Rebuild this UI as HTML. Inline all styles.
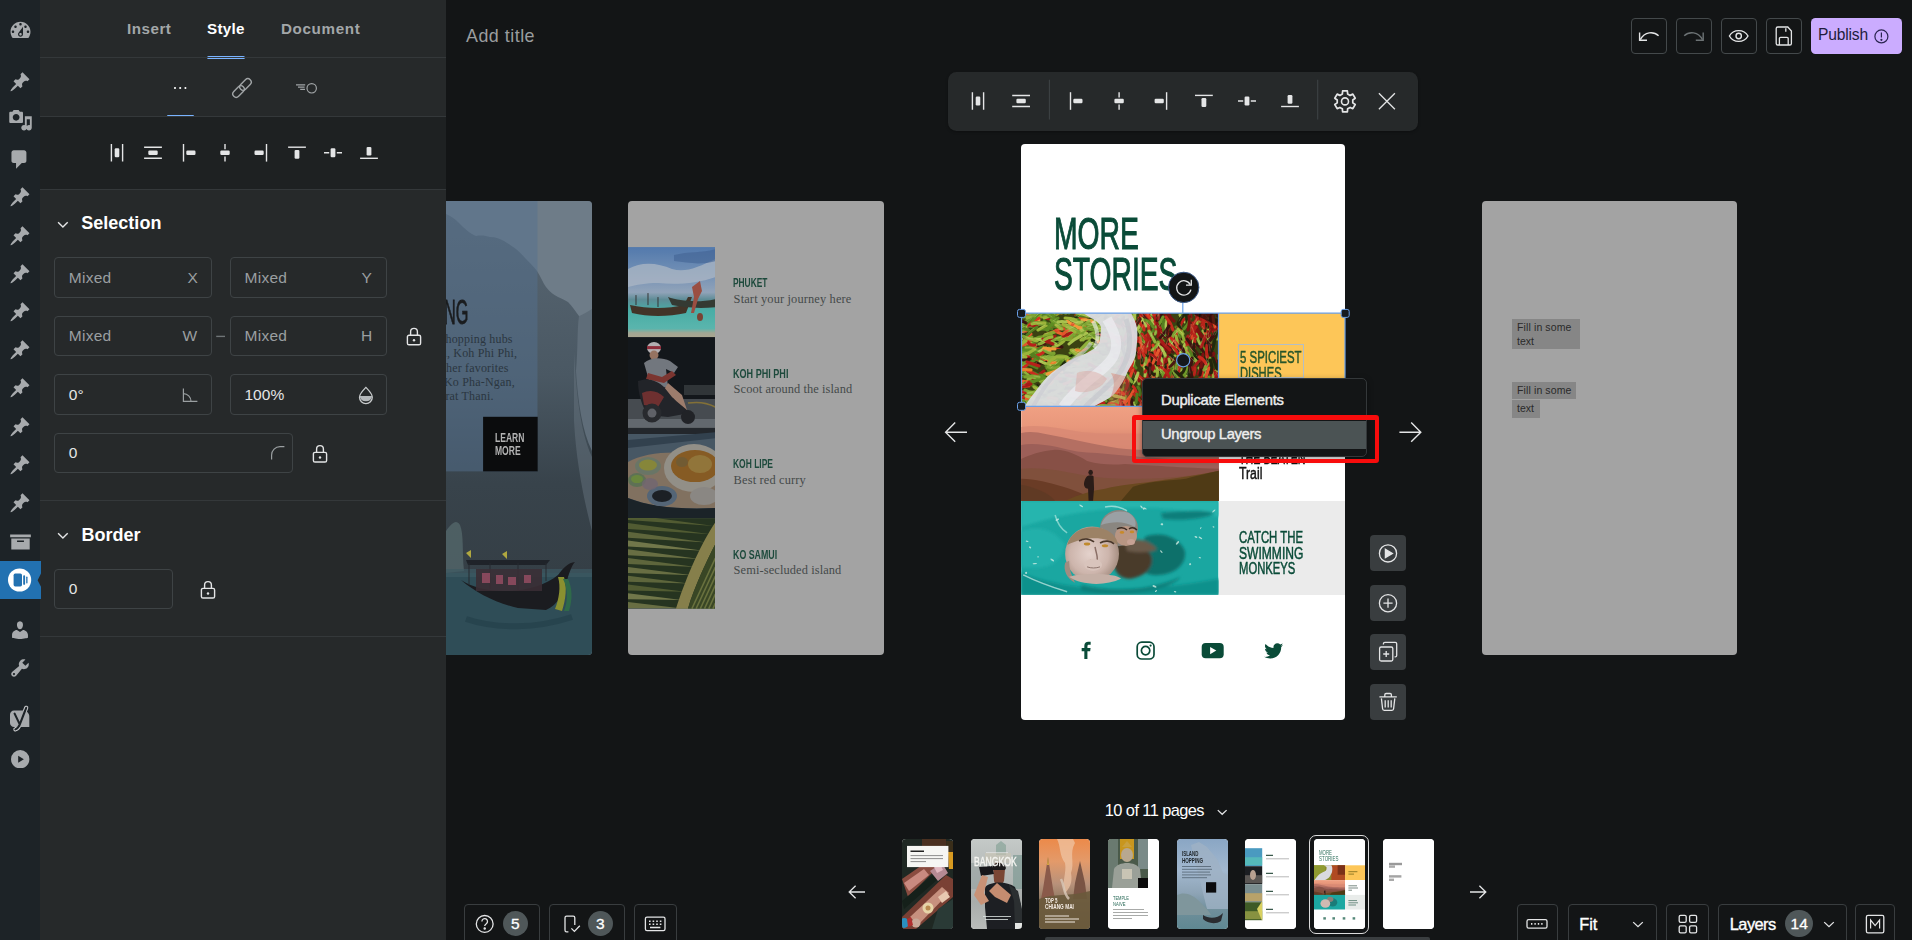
<!DOCTYPE html>
<html>
<head>
<meta charset="utf-8">
<title>Web Stories Editor</title>
<style>
*{box-sizing:border-box;margin:0;padding:0}
html,body{width:1912px;height:940px;overflow:hidden;background:#131516}
body{position:relative;font-family:"Liberation Sans",sans-serif;color:#e4e5e6}
.abs{position:absolute}
svg{position:absolute;overflow:hidden}
.t{position:absolute;white-space:nowrap;line-height:1}
/* WP sidebar */
#wp{position:absolute;left:0;top:0;width:40px;height:940px;background:#1d2327}
#wp svg{fill:#a7aaad}
#wpa{position:absolute;left:0;top:561px;width:41px;height:38.4px;background:#2271b1}
/* panel */
#panel{position:absolute;left:40px;top:0;width:406px;height:940px;background:#26292a}
.hr{position:absolute;left:0;width:406px;height:1px;background:#34383a}
.inp{position:absolute;height:40px;border:1px solid #3e4345;border-radius:4px}
.g{color:#9a9fa1}
.w{color:#e4e5e6}
.f15{font-size:15.5px}
/* canvas */
.btn{position:absolute;border:1px solid #44494b;border-radius:4px}
.page{position:absolute;border-radius:4px;overflow:hidden}
.osw{position:absolute;white-space:nowrap;line-height:1;font-weight:bold;transform-origin:0 0}
.ser{position:absolute;white-space:nowrap;line-height:1;font-family:"Liberation Serif",serif}
.sb{position:absolute;left:1370px;width:36px;height:36px;background:#393d3f;border-radius:4px}
.th{position:absolute;top:839px;width:51px;height:90px;border-radius:4px;overflow:hidden}
.badge{position:absolute;border-radius:50%;background:#4f5759;color:#fff;text-align:center}
</style>
</head>
<body>

<!-- ===== canvas area ===== -->
<div id="canvas" class="abs" style="left:446px;top:0;width:1466px;height:940px;background:#131516"></div>

<div class="page" style="left:446.0px;top:200.6px;width:146.0px;height:454.0px;border-radius:0 4px 4px 0;background:#4a5a66">
<svg style="left:0.00px;top:0.00px;" width="146.00" height="454.00" viewBox="0 0 146 454"><defs><linearGradient id="p8g" x1="0" y1="0" x2="0" y2="1"><stop offset="0" stop-color="#586672"/><stop offset=".45" stop-color="#4a5863"/><stop offset=".75" stop-color="#38434b"/><stop offset="1" stop-color="#353f46"/></linearGradient></defs><rect width="146" height="454" fill="#6e7c88"/><path d="M120 120C128 118 136 114 146 108V330H120Z" fill="#5f6d79"/><path d="M0 13C5 15 9 18 12 21C18 27 24 33 30 35C36 34 40 35 44 36C50 36 54 38 58 40C63 43 67 46 70 48C74 51 77 55 80 58C84 62 88 66 91 70C95 76 97 82 100 86C104 91 108 94 112 96C116 98 119 99 122 101C126 105 130 111 133 115C131 130 132 150 130 170C132 200 136 230 146 250V372H0Z" fill="url(#p8g)"/><path d="M128 150C130 190 134 230 146 256V330C138 300 130 260 128 220Z" fill="#6a7882" opacity=".45"/><rect x="0" y="0" width="91.500" height="270.400" fill="#54708e" opacity=".5"/><rect x="37.100" y="215.800" width="54.600" height="54.600" fill="#0b0c0d"/><path d="M0 330C6 322 10 318 14 324C18 334 16 350 18 370L0 372Z" fill="#54666a" opacity=".8"/><rect x="0" y="372" width="146" height="82" fill="#2f4d57"/><rect x="0" y="368" width="146" height="8" fill="#3d5a62" opacity=".7"/><path d="M15 379C30 392 50 402 72 407L100 409C112 404 118 392 122 376C124 370 126 364 129 361C122 362 118 366 112 374C100 384 80 390 60 390C40 390 26 386 15 379Z" fill="#1b1c20"/><path d="M20 359H104L100 364H22Z" fill="#1f2329"/><path d="M23 362V384M44 362V388M72 362V390M100 362V380" stroke="#262a30" stroke-width="1"/><rect x="30" y="368" width="66" height="22" fill="#3a2e34" opacity=".9"/><path d="M36 372h8v10h-8zM50 374h7v9h-7zM62 376h8v8h-8zM78 374h7v8h-7z" fill="#a05068" opacity=".75"/><path d="M112 376C115 386 113 398 109 408L116 410C120 398 121 386 118 376Z" fill="#8a9030"/><path d="M117 378C122 388 122 400 118 410L123 410C127 398 126 386 122 378Z" fill="#2f6a4a"/><path d="M20 352l5-3v8zM56 353l5-3v8z" fill="#b0a840"/><path d="M20 418C50 428 90 428 126 416" stroke="#24404a" stroke-width="6" fill="none" opacity=".7"/></svg>
<div class="osw" style="left:-2.50px;top:94.84px;font-size:34.92px;color:#1a1c1e;transform:scaleX(0.4659);font-weight:normal;-webkit-text-stroke:0.80px #1a1c1e;">NG</div>
<div class="t" style="left:-0.50px;top:132.15px;font-size:12.00px;color:#2b3640;font-family:'Liberation Serif',serif;letter-spacing:0.180px;">hopping hubs</div>
<div class="t" style="left:-2.60px;top:146.55px;font-size:12.00px;color:#2b3640;font-family:'Liberation Serif',serif;letter-spacing:0.180px;">i, Koh Phi Phi,</div>
<div class="t" style="left:0.00px;top:160.95px;font-size:12.00px;color:#2b3640;font-family:'Liberation Serif',serif;letter-spacing:0.180px;">her favorites</div>
<div class="t" style="left:-2.00px;top:175.35px;font-size:12.00px;color:#2b3640;font-family:'Liberation Serif',serif;letter-spacing:0.180px;">Ko Pha-Ngan,</div>
<div class="t" style="left:-0.60px;top:189.75px;font-size:12.00px;color:#2b3640;font-family:'Liberation Serif',serif;letter-spacing:0.180px;">rat Thani.</div>
<div class="osw" style="left:48.60px;top:230.65px;font-size:13.41px;color:#b4b4b4;transform:scaleX(0.6366);">LEARN</div>
<div class="osw" style="left:48.60px;top:243.05px;font-size:13.41px;color:#b4b4b4;transform:scaleX(0.6364);">MORE</div>
</div>

<div class="page" style="left:627.8px;top:200.6px;width:256.400px;height:454px;background:#a3a3a3">
<svg style="left:0.00px;top:46.20px;" width="87.40" height="90.60" viewBox="0 0 87.4 90.4"><defs><linearGradient id="b1" x1="0" y1="0" x2="0" y2="1"><stop offset="0" stop-color="#5d8ac6"/><stop offset=".3" stop-color="#84a6d0"/><stop offset=".5" stop-color="#a6bbd4"/><stop offset=".58" stop-color="#6aa0ac"/><stop offset=".7" stop-color="#52c6be"/><stop offset=".9" stop-color="#66d0c6"/><stop offset=".95" stop-color="#b9bda8"/><stop offset="1" stop-color="#c2bda4"/></linearGradient></defs><rect width="87.400" height="90.400" fill="url(#b1)"/><path d="M0 22C14 14 30 16 44 22C58 26 70 20 87.400 12V30C70 36 50 38 30 36C18 36 8 38 0 40Z" fill="#c5d2e2" opacity=".75"/><path d="M46 8C60 4 74 6 87.400 2V14C74 18 60 16 46 14Z" fill="#4a70a8" opacity=".6"/><path d="M2 58C20 62 40 62 56 58L60 50L64 50L58 66C40 70 20 70 4 66Z" fill="#4a3a2c"/><path d="M40 50C52 54 70 56 87.400 52V60C70 62 54 60 44 58Z" fill="#3a4038"/><path d="M64 40L72 34L74 44L70 52L66 66L63 66L66 50Z" fill="#b0584a"/><path d="M8 48V58M20 46V58M30 50V60" stroke="#3a3a3a" stroke-width="1"/><ellipse cx="72" cy="70" rx="3" ry="4" fill="#8a4a3a"/><rect width="87.400" height="90.400" fill="#131516" opacity="0.14"/></svg>
<svg style="left:0.00px;top:136.60px;" width="87.40" height="90.60" viewBox="0 0 87.4 90.4"><rect width="87.400" height="90.400" fill="#14171c"/><path d="M0 62H87.400V90.400H0Z" fill="#4e5358"/><path d="M56 48H87.400V58H56Z" fill="#3d4246" opacity=".8"/><path d="M0 82H87.400V90.400H0Z" fill="#6e747a"/><path d="M60 66C72 64 80 66 87.400 70" stroke="#b09030" stroke-width="1.500" fill="none" opacity=".7"/><ellipse cx="26" cy="11" rx="7" ry="6" fill="#c9c3c6"/><path d="M19 9H33V12H19Z" fill="#a03040"/><ellipse cx="26" cy="18" rx="4.500" ry="4.500" fill="#a8806c"/><path d="M16 26C22 20 34 20 42 24L50 30L46 36L38 32L40 50L24 52L20 40Z" fill="#80848c"/><path d="M40 46L54 58L60 76L54 78L46 62L34 56Z" fill="#b08a78"/><path d="M20 36L34 40L44 34L48 38L36 46L18 42Z" fill="#8a3a34"/><path d="M10 44C20 40 30 44 36 50L44 60C50 66 56 70 62 76L40 80L20 78C14 70 10 56 10 44Z" fill="#25262c"/><path d="M14 56C22 52 30 54 36 60L30 70L16 68Z" fill="#7c3434"/><circle cx="24" cy="76" r="9.500" fill="#2c2d32"/><circle cx="24" cy="76" r="4.500" fill="#6a6c72"/><circle cx="60" cy="80" r="7" fill="#24252a"/><rect width="87.400" height="90.400" fill="#131516" opacity="0.12"/></svg>
<svg style="left:0.00px;top:227.00px;" width="87.40" height="90.60" viewBox="0 0 87.4 90.4"><rect width="87.400" height="90.400" fill="#5e7486"/><path d="M0 0H87.400V6H0Z" fill="#2a3036"/><path d="M0 12L87.400 4V10L0 20Z" fill="#3f5566"/><path d="M0 34C20 22 60 22 87.400 30V80C50 82 20 78 0 70Z" fill="#b09a80"/><path d="M0 70C20 78 50 82 87.400 80V90.400H0Z" fill="#1f2a30"/><ellipse cx="66" cy="40" rx="30" ry="24" fill="#c9c4b8"/><ellipse cx="67" cy="38" rx="24" ry="16" fill="#b87a2a"/><ellipse cx="72" cy="36" rx="12" ry="9" fill="#c8a04a"/><ellipse cx="54" cy="34" rx="6" ry="5" fill="#9a7a40"/><ellipse cx="20" cy="38" rx="13" ry="9" fill="#8fa088"/><ellipse cx="20" cy="37" rx="9" ry="5.500" fill="#b8b84a"/><ellipse cx="9" cy="52" rx="9" ry="7" fill="#7f9a70"/><ellipse cx="9" cy="51" rx="6" ry="4" fill="#90b850"/><ellipse cx="34" cy="68" rx="15" ry="10" fill="#7088a0"/><ellipse cx="34" cy="68" rx="10" ry="6" fill="#20262c"/><ellipse cx="76" cy="68" rx="14" ry="9" fill="#bdb9b2"/><ellipse cx="22" cy="56" rx="8" ry="6" fill="#9a8a98" opacity=".8"/><rect width="87.400" height="90.400" fill="#131516" opacity="0.30"/></svg>
<svg style="left:0.00px;top:317.40px;" width="87.40" height="90.60" viewBox="0 0 87.4 90.4"><rect width="87.400" height="90.400" fill="#2e4224"/><path d="M86.0 8.0L0 -4.0L0 2.0Z" fill="#6c7a3e"/><path d="M82.4 16.2L0 4.8L0 10.8Z" fill="#6c7a3e"/><path d="M78.8 24.4L0 13.6L0 19.6Z" fill="#7f8a4c"/><path d="M75.2 32.6L0 22.4L0 28.4Z" fill="#9aa260"/><path d="M71.6 40.8L0 31.2L0 37.2Z" fill="#8d9656"/><path d="M68.0 49.0L0 40.0L0 46.0Z" fill="#7f8a4c"/><path d="M64.4 57.2L0 48.8L0 54.8Z" fill="#8d9656"/><path d="M60.8 65.4L0 57.6L0 63.6Z" fill="#7f8a4c"/><path d="M57.2 73.6L0 66.4L0 72.4Z" fill="#6c7a3e"/><path d="M53.6 81.8L0 75.2L0 81.2Z" fill="#9aa260"/><path d="M50.0 90.0L0 84.0L0 90.0Z" fill="#8d9656"/><path d="M48 90.400C56 66 70 30 87.400 4V26C78 44 66 70 60 90.400Z" fill="#b8ae62"/><path d="M60 90.400C66 70 78 44 87.400 26V90.400Z" fill="#4a5c2c"/><path d="M64.0 90.400L87.400 40.0" stroke="#8e9a50" stroke-width="1.600"/><path d="M68.2 90.400L87.400 49.0" stroke="#8e9a50" stroke-width="1.600"/><path d="M72.4 90.400L87.400 58.0" stroke="#8e9a50" stroke-width="1.600"/><path d="M76.6 90.400L87.400 67.0" stroke="#8e9a50" stroke-width="1.600"/><path d="M80.8 90.400L87.400 76.0" stroke="#8e9a50" stroke-width="1.600"/><path d="M85.0 90.400L87.400 85.0" stroke="#8e9a50" stroke-width="1.600"/><rect width="87.400" height="90.400" fill="#131516" opacity="0.30"/></svg>
<div class="osw" style="left:105.60px;top:75.65px;font-size:13.41px;color:#1d4a3c;transform:scaleX(0.6240);">PHUKET</div>
<div class="t" style="left:105.80px;top:92.21px;font-size:12.40px;color:#454a4a;font-family:'Liberation Serif',serif;letter-spacing:0.143px;">Start your journey here</div>
<div class="osw" style="left:105.60px;top:166.15px;font-size:13.41px;color:#1d4a3c;transform:scaleX(0.6761);">KOH PHI PHI</div>
<div class="t" style="left:105.80px;top:182.72px;font-size:12.40px;color:#454a4a;font-family:'Liberation Serif',serif;letter-spacing:0.084px;">Scoot around the island</div>
<div class="osw" style="left:105.60px;top:256.65px;font-size:13.41px;color:#1d4a3c;transform:scaleX(0.6317);">KOH LIPE</div>
<div class="t" style="left:105.80px;top:273.22px;font-size:12.40px;color:#454a4a;font-family:'Liberation Serif',serif;letter-spacing:0.151px;">Best red curry</div>
<div class="osw" style="left:105.60px;top:347.15px;font-size:13.41px;color:#1d4a3c;transform:scaleX(0.6593);">KO SAMUI</div>
<div class="t" style="left:105.80px;top:363.72px;font-size:12.40px;color:#454a4a;font-family:'Liberation Serif',serif;letter-spacing:0.109px;">Semi-secluded island</div>
</div>

<div class="page" style="left:1021.0px;top:144.0px;width:324px;height:576px;background:#fff">
<div class="osw" style="left:33.40px;top:67.41px;font-size:45.11px;color:#0a4b38;transform:scaleX(0.6266);font-weight:normal;-webkit-text-stroke:1.10px #0a4b38;">MORE</div>
<div class="osw" style="left:33.00px;top:108.00px;font-size:45.95px;color:#0a4b38;transform:scaleX(0.6143);font-weight:normal;-webkit-text-stroke:1.10px #0a4b38;">STORIES</div>
<svg style="left:0.00px;top:169.00px;" width="197.50" height="94.00" viewBox="0 0 197.5 94"><rect width="197.5" height="94.0" fill="#3b4212"/><path d="M84 51q5 1 10 4M102 4q-0 5 3 8M185 45q-1 5 -1 11M55 2q5 2 9 2M28 36q5 -1 11 -2M163 41q2 5 2 11M55 56q7 -2 14 -3M109 37q-2 4 -3 8M-6 51q4 -3 7 -6M187 13q-0 4 0 9" stroke="#d8361f" stroke-width="3" stroke-linecap="round" fill="none"/><path d="M90 60q3 -3 7 -3M55 23q6 -3 11 -7M109 92q1 6 -3 11M18 83q4 3 10 4M41 83q5 -4 11 -3M2 41q5 1 10 0M-0 72q6 -4 12 -7M79 8q5 5 12 7M154 61q-4 4 -6 9M76 79q5 -2 6 -6M144 41q2 5 -1 10M22 60q5 1 9 4M-2 27q4 -1 8 2M174 86q4 5 8 11M98 72q3 5 3 11M26 55q6 -1 12 0M17 50q4 -5 11 -5M56 7q4 -3 8 -8M67 39q7 -2 12 -6M198 42q0 5 -0 11M92 39q5 1 11 1M75 76q4 1 7 -2M41 57q7 -0 14 1M64 44q5 -5 11 -9M154 49q5 5 8 11" stroke="#86a82e" stroke-width="3" stroke-linecap="round" fill="none"/><path d="M140 -7q-2 7 -3 14M145 78q-0 7 3 14M157 35q1 5 4 9M185 41q4 5 2 11M126 22q-5 4 -6 10M194 84q-3 6 -6 12M115 15q-1 7 -4 13M139 81q2 5 1 11M110 13q1 6 2 12M200 13q1 7 3 15M130 25q-3 7 -6 13" stroke="#c42c1c" stroke-width="3" stroke-linecap="round" fill="none"/><path d="M58 56q6 1 11 1M125 71q1 7 4 14M81 74q7 -1 13 -4M168 56q-2 7 -4 13M112 37q-3 7 -3 14M142 12q-0 6 -1 12M178 55q3 5 6 10M155 80q-4 5 -6 12M133 93q2 4 6 6M134 53q6 4 9 11M91 82q4 -1 5 -5M186 54q1 5 -2 9M55 41q4 -3 9 -6M82 65q8 -0 15 3M117 64q1 4 1 7M7 66q3 -2 7 -4M73 77q6 -2 12 -4M138 7q-2 7 -4 14M-7 34q2 -4 7 -4M53 52q4 -0 7 -3M-7 17q6 -1 12 -2M142 28q-2 7 -7 11M30 52q6 -1 9 -6M10 -1q4 3 8 3M67 78q4 -4 9 -4M85 57q6 -4 13 -4M73 14q3 -5 9 -7M20 49q3 -5 9 -6M182 -1q4 6 8 11" stroke="#8fb13c" stroke-width="3" stroke-linecap="round" fill="none"/><path d="M83 22q7 4 14 5M94 61q3 3 7 3M88 25q7 -1 15 -1M24 22q6 -2 12 -5M52 37q2 3 7 3" stroke="#e8622a" stroke-width="3" stroke-linecap="round" fill="none"/><path d="M39 29q3 -5 9 -7M28 70q4 0 8 -1M-0 10q7 -3 13 -6M45 25q6 1 12 -3M21 46q6 -1 12 -5M12 31q4 3 9 5M65 11q4 -3 8 -2M82 25q6 3 12 4M11 63q4 3 9 4M14 26q5 -3 10 -2M175 42q1 4 5 6M113 32q1 7 -1 15M84 64q3 -3 8 -4M153 28q3 4 5 8M60 39q5 -2 10 1M111 -6q-6 4 -9 11M154 59q-1 4 -1 8M194 -1q-0 4 4 6M49 40q4 -1 8 -4M54 80q6 1 11 5M90 22q5 3 11 2M74 17q7 -0 14 1M54 53q6 0 12 0M34 46q5 1 10 2" stroke="#6f9a2a" stroke-width="3" stroke-linecap="round" fill="none"/><path d="M144 33q-1 6 -4 11M120 46q4 4 6 10M98 48q2 4 7 6M182 24q-3 3 -3 8M121 42q4 6 9 11M185 23q2 6 7 10M15 34q4 -3 9 -3M174 89q-6 5 -8 13M177 26q2 6 5 10M191 58q5 3 7 9M188 85q4 4 4 9M99 31q-1 7 1 13M74 45q3 2 7 3M178 85q-2 7 -6 13M60 13q5 -1 8 2" stroke="#4a1a12" stroke-width="3" stroke-linecap="round" fill="none"/><path d="M123 3q5 6 11 10M146 89q5 3 8 9M170 10q5 6 7 13M149 90q-0 7 -2 14M184 48q-4 6 -7 13M168 25q-1 4 -3 7M185 55q2 5 6 8M108 54q-2 3 -5 7M167 -6q3 5 3 11M132 18q-1 4 -2 8M163 94q-4 2 -6 7M113 57q4 5 5 11M156 56q-0 5 3 8" stroke="#8e1614" stroke-width="3" stroke-linecap="round" fill="none"/><path d="M117 94q-1 5 2 8M55 4q4 1 9 2M46 70q2 -4 6 -4M13 79q6 -3 12 -8M11 88q6 -1 9 -6M127 -5q2 5 1 10M62 36q5 -0 9 1M189 70q-3 6 -5 13M151 62q1 4 5 5M72 35q7 -1 13 1M155 14q3 4 3 9M144 73q1 4 2 8M113 47q-1 5 2 8M70 4q4 3 9 2M79 60q6 -3 11 -7M24 43q6 4 12 4M3 14q6 -2 12 0M140 15q3 3 3 7M107 92q-5 4 -8 10M5 50q5 2 11 5M23 12q4 3 8 4M72 65q4 -3 9 -5M137 62q-0 5 -2 9M196 57q6 3 8 9M-2 86q6 2 11 4M-7 7q6 0 11 2M22 45q4 1 7 3" stroke="#557f1f" stroke-width="3" stroke-linecap="round" fill="none"/><path d="M13 101q4 -3 7 -7M70 96q5 4 12 3M121 8q-2 6 -7 11M1 46q5 -1 6 -5M102 67q-2 3 -4 6M59 23q3 -2 7 -2M46 56q5 -4 11 -5M178 72q4 5 7 11M123 -6q4 5 9 8M159 2q2 4 5 7M77 17q5 1 9 -1M70 56q6 -1 13 0M89 47q4 -1 7 2M18 78q4 1 8 1M77 77q6 1 12 2M78 25q6 1 12 -1M72 76q6 -2 11 -7M167 76q5 6 9 12M45 12q6 1 11 5M113 90q1 4 1 8M104 35q2 5 2 10M173 25q-1 6 -1 12M17 79q6 -0 13 -0M123 86q3 5 5 10M49 57q7 -1 14 -1M19 47q5 2 10 5M130 82q2 6 0 11" stroke="#a9c24e" stroke-width="3" stroke-linecap="round" fill="none"/><path d="M84 98q5 -4 11 -8M130 41q4 5 9 10M134 36q-3 3 -6 6M189 53q3 6 4 12M154 56q-1 5 1 9M184 4q4 2 4 6M169 34q1 7 2 15M57 96q4 -0 8 -0M31 13q7 -1 14 1" stroke="#e2552c" stroke-width="3" stroke-linecap="round" fill="none"/><path d="M136 30q3 5 2 12M112 33q5 5 8 11M46 19q3 -1 7 -0M0 41q3 3 8 3M61 59q7 1 13 5M87 32q4 -4 8 -7M58 17q3 -2 7 -0M70 90q5 3 11 4" stroke="#b8201a" stroke-width="3" stroke-linecap="round" fill="none"/><path d="M194 58q5 3 7 9M135 50q3 3 4 8M166 54q-0 6 0 13M195 90q0 6 2 11M161 42q-2 4 -4 9M42 77q4 1 7 3M198 72q4 2 4 6M154 91q-1 6 -2 12M68 7q5 -5 12 -7M34 28q6 -2 11 -1M168 49q1 7 1 15M173 75q-5 6 -7 13M143 73q-5 6 -6 13M117 -8q5 3 7 9" stroke="#1f2a0c" stroke-width="3" stroke-linecap="round" fill="none"/><path d="M184 64q-0 4 -1 7M156 51q1 6 -2 10M17 17q5 -2 10 -0M165 67q-1 7 1 14M54 50q6 -1 11 -0M25 79q4 -6 11 -10M35 -5q4 3 9 5M83 56q4 -2 9 -3M125 8q-3 4 -5 9M35 62q5 0 11 1M90 13q6 3 11 7M5 38q6 4 12 6M126 4q4 1 6 5M-3 15q5 -5 12 -5M139 44q2 5 7 7M176 75q-5 5 -9 12M109 19q-0 5 2 10M5 36q3 -4 7 -7M39 -4q4 3 9 4M198 24q4 4 6 8M151 66q-5 4 -8 10M96 59q2 6 6 11M183 30q1 6 -3 12" stroke="#5e8c22" stroke-width="3" stroke-linecap="round" fill="none"/><path d="M149 4q-3 4 -2 10M108 93q4 5 9 10M130 73q2 6 2 12M184 70q-0 5 2 9M156 25q-3 6 -8 11M143 47q1 7 6 12M141 28q-2 7 -8 11M176 70q3 4 7 7M182 73q3 5 0 11M123 86q-2 4 -4 9M190 4q-0 5 4 8M169 67q5 4 8 10" stroke="#7a1210" stroke-width="3" stroke-linecap="round" fill="none"/><path d="M76 76q6 -0 12 1M69 32q7 -1 11 -6M105 0q3 4 4 8M112 56q-2 7 -6 14M138 68q2 4 1 8M11 34q5 2 9 2M57 6q4 -2 8 -2M29 71q3 -6 9 -9M12 46q7 -0 13 3M167 45q1 4 2 7" stroke="#de4426" stroke-width="3" stroke-linecap="round" fill="none"/><path d="M125 -2q-5 6 -8 13M1 23q5 1 10 1M28 21q6 4 12 7M136 18q3 5 4 10M14 4q4 -0 7 -4M-4 39q5 -2 10 -4M35 2q5 -3 9 -7M31 28q6 -3 13 -5M-7 46q4 -3 8 -5M67 22q4 5 10 6M67 46q5 -2 10 -2M53 16q6 -4 12 -9M107 32q-5 4 -5 10M122 42q-0 6 2 12M154 47q-3 6 -3 12M47 66q7 -2 13 -4M36 79q5 -1 7 -6M61 21q2 -4 6 -6M151 86q-3 3 -5 7M187 88q3 6 1 13M14 12q5 -1 10 -1M156 68q1 6 7 9M8 96q5 -2 8 -6" stroke="#7da332" stroke-width="3" stroke-linecap="round" fill="none"/><path d="M147 50q-0 5 0 11M12 67q5 -5 11 -9M-3 18q6 -2 11 -6M23 4q4 3 8 1M132 -1q3 6 3 13M5 10q5 3 11 3M159 76q3 7 9 12M70 22q4 1 8 -0" stroke="#a51a18" stroke-width="3" stroke-linecap="round" fill="none"/><path d="M19 43q6 2 11 6M67 64q6 -4 12 -7M48 13q6 -0 12 -4M37 94q4 2 8 2M75 37q4 -2 8 -3M28 58q5 -1 6 -5M182 47q3 4 4 9M5 84q7 2 12 8M132 62q-4 3 -6 8M68 24q6 -0 12 -1M85 44q4 -1 7 3M106 20q4 5 4 11M142 77q5 3 8 9M86 7q4 -4 9 -5M102 63q-1 4 -4 6M100 38q-1 5 1 11M12 97q3 -3 6 -6M41 84q7 -2 13 -5M91 49q3 2 7 3M17 17q5 -3 11 -6M202 17q-3 5 -6 9M186 76q1 5 4 9M165 63q-6 3 -8 9M67 75q4 1 8 -1M177 4q-0 4 -1 7M87 66q5 1 10 0" stroke="#9bb43a" stroke-width="3" stroke-linecap="round" fill="none"/><path d="M182 1q-0 4 1 8M154 90q-4 6 -6 13M158 14q-3 4 -3 8M133 55q-4 5 -8 10M171 91q5 4 8 10M181 9q2 3 5 6M148 26q-1 5 -4 10M147 41q5 4 8 9M161 42q5 3 8 8M168 32q1 6 5 10M122 -4q-1 6 -4 12M128 35q1 6 4 9M119 65q6 2 8 8M144 46q-1 5 -3 9M123 24q5 3 6 9M193 -5q5 5 8 12M124 46q6 3 9 9" stroke="#a81c18" stroke-width="3" stroke-linecap="round" fill="none"/><path d="M25 48q4 3 9 1M66 25q6 -0 11 1M53 94q4 -3 7 -7M70 91q6 1 11 -3M-8 -7q6 1 10 6M22 -2q7 1 15 2" stroke="#ea7f2a" stroke-width="3" stroke-linecap="round" fill="none"/><path d="M106 42q2 5 0 10M113 24q2 4 5 6M44 54q5 -4 11 -5M17 72q4 2 7 5M134 -3q6 4 11 10M118 31q1 5 -2 9M185 83q-2 7 -8 11M146 76q4 6 8 11M146 49q-2 6 -5 12M187 39q3 3 3 7M38 59q4 -1 7 -5M189 7q5 3 9 8M190 89q-2 4 -3 8M157 -7q4 4 8 8M187 11q-0 4 -1 8M196 48q1 7 5 12" stroke="#23260c" stroke-width="3" stroke-linecap="round" fill="none"/><path d="M166 80q3 5 6 10M137 54q5 5 8 11M155 26q2 5 4 9M137 11q1 4 4 6M146 19q5 5 11 9M182 -3q-3 3 -6 8M99 53q1 7 1 14M174 26q-1 6 -1 12M99 -4q3 2 5 6M104 86q1 4 -3 7M177 -1q2 5 2 10M165 43q2 4 2 9" stroke="#b8241a" stroke-width="3" stroke-linecap="round" fill="none"/><path d="M118 35q-0 5 0 10M60 96q5 -1 9 -6M64 15q5 -1 8 -5M87 26q7 1 14 4M-4 88q6 -4 12 -7M9 35q7 1 12 6M89 83q4 -3 7 -6M125 5q-3 6 -2 12M88 67q7 3 14 2" stroke="#c92a1e" stroke-width="3" stroke-linecap="round" fill="none"/><path d="M7 3q5 2 11 4M83 58q2 -3 6 -4M30 54q5 4 11 5M56 15q5 -1 10 -0" stroke="#f09a3a" stroke-width="3" stroke-linecap="round" fill="none"/><path d="M32 32q4 1 9 2M-7 46q7 2 15 -0M150 19q-2 7 -3 14M153 69q-4 5 -8 10M110 -1q-1 7 2 12M185 -8q5 5 9 10M-0 57q4 -2 8 -1M17 50q4 1 8 -1M130 42q3 2 3 7M114 36q-2 7 -7 13M128 -1q-1 6 -6 11" stroke="#3a1410" stroke-width="3" stroke-linecap="round" fill="none"/><path d="M-6 75q7 -2 14 -2M20 87q7 -2 14 0M147 52q2 6 3 12M159 64q1 5 -2 9M176 91q4 5 7 12M198 85q-4 3 -3 7M85 13q4 1 8 0M72 23q7 -1 15 -1M69 97q7 0 13 1" stroke="#d8361f" stroke-width="3" stroke-linecap="round" fill="none"/><path d="M-4 48q3 2 7 3M81 59q7 -0 14 2M88 47q7 -0 13 1M58 53q4 -3 10 -3M34 82q4 1 8 3M119 21q3 5 5 10M-8 48q7 1 13 3M28 63q2 -5 7 -7M187 -4q-4 6 -8 12M45 0q4 -4 9 -5M153 71q-2 6 -6 10M100 13q-0 7 1 14M120 28q2 4 6 5M144 79q2 3 5 5M-5 57q5 -0 7 -4M21 86q4 4 10 6M63 83q4 -1 8 -2M122 30q-2 3 -2 7M140 49q-0 6 4 11M39 76q3 3 7 2M20 4q4 -1 9 -3M92 73q5 0 8 3M113 -8q0 4 2 8M44 19q6 -2 11 -5" stroke="#86a82e" stroke-width="3" stroke-linecap="round" fill="none"/><path d="M183 80q-2 6 -5 12M102 -4q2 6 1 12M196 78q4 2 4 6M182 58q-3 7 -2 14M125 39q3 5 7 10M118 5q0 6 5 10M117 62q5 5 10 9M184 -1q-2 4 -5 7M155 92q-5 5 -9 11M181 12q4 2 3 7" stroke="#c42c1c" stroke-width="3" stroke-linecap="round" fill="none"/><path d="M56 99q4 -4 10 -3M86 75q5 -2 10 -2M22 26q7 1 13 5M28 96q5 2 9 1M-6 15q6 1 11 -0M38 14q5 2 11 2M34 86q4 0 8 0M123 84q-1 4 -1 8M152 25q3 4 6 8M39 63q6 0 12 0M80 0q4 2 9 2M19 68q7 2 14 1M82 20q3 4 9 5M51 37q6 -0 11 4M72 2q6 -4 11 -9M18 31q5 -1 7 -5M84 67q6 -0 12 1M160 52q-4 3 -5 8M67 41q5 3 11 6M93 100q6 -3 11 -6M-5 80q3 2 7 0M90 53q5 -4 10 -7M140 29q3 5 7 8M84 11q4 -3 9 -4M-2 57q6 1 9 5M88 20q7 -1 13 -2M118 18q3 4 3 8M11 64q6 2 12 2M84 27q4 2 9 1" stroke="#8fb13c" stroke-width="3" stroke-linecap="round" fill="none"/><path d="M-0 68q5 1 10 1M83 69q7 -1 11 -7M67 38q4 3 8 4M36 19q7 3 14 5M40 0q4 -1 8 -2" stroke="#e8622a" stroke-width="3" stroke-linecap="round" fill="none"/><path d="M6 -4q5 0 8 4M74 54q4 1 7 3M46 72q3 -3 7 -4M11 93q7 -3 14 -3M73 82q7 1 12 6M111 16q4 5 6 12M68 47q4 -2 7 -5M75 33q5 3 10 6M129 82q-0 4 3 7M6 82q5 -0 10 -3M2 94q6 2 12 4M70 77q7 -1 12 -5M89 27q5 -3 10 -4M140 57q1 5 5 8M94 3q5 0 9 4M137 81q5 3 7 8M108 76q-4 4 -4 10M85 28q4 -0 7 -2M70 49q6 0 11 -1M112 25q-3 3 -4 8M22 39q3 -2 6 -4M75 96q6 2 13 3M63 26q4 -2 9 0" stroke="#6f9a2a" stroke-width="3" stroke-linecap="round" fill="none"/><path d="M140 78q5 2 7 8M120 4q-3 6 -7 11M189 58q5 2 7 6M180 -7q1 5 4 8M192 89q3 6 2 12M176 92q-1 6 -4 11M158 47q-4 3 -3 8M108 -5q-3 6 -7 12M83 74q6 1 12 1M149 72q-1 6 -4 11M139 17q5 5 10 9M142 79q1 4 5 6M168 33q7 4 10 11M162 73q-3 3 -2 8M155 36q2 3 4 6" stroke="#4a1a12" stroke-width="3" stroke-linecap="round" fill="none"/><path d="M196 16q-2 4 -4 8M156 26q-4 5 -3 11M193 91q2 5 5 9M182 66q-3 6 -1 12M196 60q-1 6 -6 11M172 -4q4 4 4 10M149 39q-2 5 -4 10M203 66q-3 3 -5 6M181 78q1 4 0 9M172 20q0 5 -4 7M184 49q3 5 8 8M103 79q-1 8 -6 14" stroke="#8e1614" stroke-width="3" stroke-linecap="round" fill="none"/><path d="M70 6q5 -2 10 -5M76 18q2 -4 7 -5M10 59q4 1 7 3M81 51q5 3 11 3M182 27q-1 4 -3 7M84 50q5 -2 10 0M27 81q6 3 13 5M75 9q5 1 10 4M1 35q6 -1 11 -3M134 15q-3 5 -7 9M-4 55q7 -1 14 2M93 39q5 -3 8 -9M121 48q2 4 3 9M81 39q5 1 11 1M11 43q6 3 13 7M51 82q6 -2 12 -4M77 3q4 -2 8 -1M22 2q6 -1 12 -1M15 61q4 2 9 1M23 8q5 5 12 6M68 87q3 -3 6 -4M203 78q0 7 -3 13M10 40q5 -4 12 -6M62 41q6 5 13 5M56 6q5 4 12 7M166 -3q-2 6 -5 12M63 70q3 -3 7 -5" stroke="#557f1f" stroke-width="3" stroke-linecap="round" fill="none"/><path d="M82 26q7 -2 13 -4M-9 23q7 -0 14 -0M90 90q6 -2 13 -3M15 40q5 -2 10 -5M67 31q4 -0 7 -2M164 31q-2 7 -7 12M145 7q-1 7 0 15M55 63q5 -4 11 -6M129 4q3 3 3 7M6 3q6 -4 12 -8M121 3q3 5 4 10M113 48q-1 4 -3 8M-4 17q6 1 11 4M70 90q4 -0 7 -3M106 2q-1 5 -1 10M63 59q5 -4 11 -7M53 21q5 -3 11 -5M19 48q3 2 7 3M43 98q4 0 6 -4M62 88q6 -4 11 -10M88 93q5 2 9 3M182 69q-2 6 -3 12M75 68q5 1 10 0M88 32q4 0 7 -0M67 34q4 -2 7 -5M160 49q-4 4 -5 9M65 20q5 4 11 7" stroke="#a9c24e" stroke-width="3" stroke-linecap="round" fill="none"/><path d="M1 28q4 -4 9 -7M113 77q-3 6 -8 12M67 39q5 -0 10 1M103 88q2 5 2 10M128 47q-2 4 -4 8M-3 21q5 -2 11 -1M-5 33q7 0 13 -3M-2 -3q7 -1 13 -2" stroke="#e2552c" stroke-width="3" stroke-linecap="round" fill="none"/><path d="M29 1q3 -5 8 -8M74 93q4 -2 9 -3M179 65q-3 4 -3 10M101 45q-2 4 -3 8M106 47q3 4 5 8M163 6q-3 5 -6 10M168 42q5 4 9 8M-5 77q6 2 12 3" stroke="#b8201a" stroke-width="3" stroke-linecap="round" fill="none"/><path d="M203 81q-4 6 -3 13M138 -1q3 6 1 11M42 51q5 -5 10 -9M141 -4q-1 4 -4 7M173 43q4 2 5 7M185 75q-2 6 -0 11M-3 24q3 -3 8 -3M199 75q2 6 -1 11M51 7q3 -3 6 -4M65 10q2 -4 7 -5M-0 27q3 -5 8 -7M129 35q-1 5 -3 9M132 40q4 6 5 12M113 17q-2 7 -8 12" stroke="#1f2a0c" stroke-width="3" stroke-linecap="round" fill="none"/><path d="M26 17q4 -6 11 -9M182 14q4 7 4 14M138 90q-0 4 -1 8M147 64q-0 5 -1 9M31 10q2 -3 6 -5M190 -5q2 4 4 7M171 81q-2 5 -0 11M30 -2q7 3 14 1M8 69q7 -1 14 -4M60 92q4 -2 7 -3M25 53q5 2 9 5M89 16q3 3 7 2M14 39q4 2 7 3M10 86q5 4 11 6M199 93q-2 4 -1 8M57 93q4 -5 10 -9M184 84q-1 4 -4 6M52 40q5 2 9 6M10 49q6 -2 8 -8M4 70q7 1 13 5M111 45q-3 5 -2 10M22 75q7 -1 15 -1" stroke="#5e8c22" stroke-width="3" stroke-linecap="round" fill="none"/><path d="M108 72q1 5 -2 9M190 41q4 4 5 9M138 86q-3 6 -5 13M200 6q-3 7 -7 13M187 21q-4 5 -3 12M102 92q1 4 -1 8M185 29q3 6 8 12M101 12q5 3 8 7M144 2q3 3 5 7M149 74q-3 5 -6 9M175 13q2 6 7 11M177 72q-0 6 -3 11" stroke="#7a1210" stroke-width="3" stroke-linecap="round" fill="none"/><path d="M109 87q-1 6 -4 11M48 78q6 0 9 5M184 30q5 2 7 7M200 12q-2 4 -0 7M155 53q-0 5 -2 10M199 11q-0 5 -3 9M171 11q-0 7 -0 14M147 63q-0 6 -1 12M123 71q2 7 7 11" stroke="#de4426" stroke-width="3" stroke-linecap="round" fill="none"/><path d="M4 77q5 3 11 2M193 17q3 3 1 7M125 45q1 5 -3 8M4 3q4 -3 9 -1M68 25q4 -2 6 -6M109 -0q3 3 5 6M-5 38q5 -1 9 1M134 62q0 6 -1 13M64 73q5 0 8 4M203 -8q-6 5 -8 12M156 -8q3 5 7 10M36 43q7 -1 13 3M99 -4q3 5 8 7M90 95q4 -6 11 -10M21 70q4 -4 9 -6M-1 18q4 -3 8 -1M83 47q4 -2 6 -6M33 47q5 -0 9 -2M67 1q8 -0 14 -5M201 49q-1 5 -4 9M2 4q6 -1 12 -0M171 69q4 3 6 8" stroke="#7da332" stroke-width="3" stroke-linecap="round" fill="none"/><path d="M148 26q3 5 5 10M118 79q2 3 4 6M42 24q6 -4 13 -4M26 29q4 -4 8 -6M128 29q1 4 0 8M128 -6q0 8 -3 14M127 62q1 5 1 10" stroke="#a51a18" stroke-width="3" stroke-linecap="round" fill="none"/><path d="M-3 32q6 -3 13 -2M76 15q4 0 7 2M41 55q4 -2 8 -0M148 46q1 3 1 7M157 16q2 7 5 13M23 5q5 -1 10 -4M37 73q6 -2 12 -1M196 57q-4 3 -4 9M187 17q1 6 2 13M79 80q5 -1 11 1M172 85q6 4 10 10M66 62q5 -1 11 -0M56 52q7 -3 13 -5M116 18q-0 5 3 8M154 43q1 4 -3 7M70 7q4 3 9 2M16 97q7 1 14 -3M-4 39q4 4 9 5M161 66q3 6 8 11M32 34q6 -1 11 -6M45 46q7 1 14 -2M195 75q2 4 5 8M87 6q6 -3 13 -4M60 27q4 -3 9 -3M134 58q-2 5 -1 10" stroke="#9bb43a" stroke-width="3" stroke-linecap="round" fill="none"/><path d="M181 13q5 5 9 11M167 23q-3 5 -0 10M183 85q-0 4 1 7M186 41q0 6 1 11M105 23q-2 6 -7 8M113 7q2 5 -1 11M117 28q5 2 7 6M152 71q4 4 8 7M189 77q1 6 7 10M113 17q1 5 5 9M128 17q0 8 -3 15M147 16q-1 4 -3 8M194 59q0 4 2 7M197 90q-1 6 3 11M177 94q4 2 6 6M199 75q-4 5 -7 11M136 13q3 5 7 9" stroke="#a81c18" stroke-width="3" stroke-linecap="round" fill="none"/><path d="M48 62q7 2 14 2M61 49q8 0 14 4M28 73q2 -4 6 -6M55 37q6 1 12 -1M29 56q5 1 8 5" stroke="#ea7f2a" stroke-width="3" stroke-linecap="round" fill="none"/><path d="M160 84q4 4 7 9M182 83q-2 6 -4 12M162 82q-0 5 3 10M158 10q0 5 4 8M148 41q6 4 10 10M113 13q1 5 4 9M162 85q2 5 0 10M39 69q4 -1 7 2M150 55q3 5 5 10M196 82q-2 7 -1 14M180 41q4 4 6 9M130 40q2 6 1 12M173 31q-1 6 1 13M68 22q5 1 10 1M141 35q1 5 -1 10M200 46q-4 4 -3 10" stroke="#23260c" stroke-width="3" stroke-linecap="round" fill="none"/><path d="M108 15q-5 4 -7 10M190 15q3 3 4 7M135 -8q-5 5 -9 12M185 71q-2 7 -8 11M160 52q-3 3 -2 8M113 81q4 4 8 9M134 9q2 3 1 7M123 -2q3 5 4 11M171 10q2 4 1 8M199 85q-2 6 -5 11M138 86q0 6 -0 12" stroke="#b8241a" stroke-width="3" stroke-linecap="round" fill="none"/><path d="M31 66q4 -0 9 -0M14 43q6 -1 10 -5M129 61q-1 5 1 10M110 72q4 2 5 7M121 90q-2 3 -4 6M-2 55q5 0 8 -3M190 84q-0 6 2 11M7 58q5 2 10 5M78 66q5 -1 9 -1" stroke="#c92a1e" stroke-width="3" stroke-linecap="round" fill="none"/><path d="M46 8q6 5 13 7M22 36q3 2 7 2M85 -4q6 5 13 7M61 7q6 -1 11 2" stroke="#f09a3a" stroke-width="3" stroke-linecap="round" fill="none"/><path d="M156 16q4 4 5 10M100 25q-1 7 3 12M180 50q1 6 -1 12M166 4q3 5 5 10M187 94q3 3 3 7M48 102q6 -4 11 -8M166 26q3 5 7 8M144 73q4 5 8 10M176 31q5 4 7 9M129 -6q1 4 5 6M144 -3q-5 5 -8 11" stroke="#3a1410" stroke-width="3" stroke-linecap="round" fill="none"/><path d="M177 82q-2 6 -4 13M203 78q-1 4 -4 7M93 79q5 -1 10 2M132 32q3 6 2 12M92 7q4 -3 8 -8M182 68q2 5 7 6M5 12q7 -3 13 -7M126 86q-5 5 -9 11M125 -3q1 5 4 8" stroke="#d8361f" stroke-width="3" stroke-linecap="round" fill="none"/><path d="M60 94q4 -2 8 2M34 68q3 4 8 4M24 22q5 -2 10 -3M78 25q5 0 11 2M50 72q5 -1 8 2M73 57q5 0 11 -1M147 59q-2 4 -1 9M65 60q7 -2 12 -7M90 97q4 -4 8 -8M37 25q7 2 15 2M137 29q-1 5 -6 8M68 13q4 1 8 1M90 72q6 -2 13 -3M161 18q-0 5 2 9M16 3q4 -2 7 -5M81 54q7 -2 12 -6M14 28q5 -2 9 -3M152 57q3 7 9 12M10 81q6 -1 10 3M6 90q3 -6 9 -8M23 23q3 -2 7 -2M43 -3q6 3 12 1M31 58q3 -3 8 -3M61 85q3 -4 8 -6" stroke="#86a82e" stroke-width="3" stroke-linecap="round" fill="none"/><path d="M164 78q6 4 9 11M159 17q-4 4 -7 8M166 33q-1 5 2 8M200 73q0 4 -1 8M145 4q5 6 7 13M140 -10q-1 7 -7 12M126 6q2 6 2 12M146 87q-3 7 -8 12M176 76q5 4 5 10M153 72q3 5 7 9" stroke="#c42c1c" stroke-width="3" stroke-linecap="round" fill="none"/><path d="M182 18q3 4 6 8M94 58q7 3 10 10M6 5q4 -1 8 -2M151 50q0 4 -3 7M69 77q4 -1 8 -2M-10 34q7 -2 13 -7M80 45q5 -1 11 -3M128 18q3 5 6 11M141 81q3 7 9 11M65 34q7 -4 14 -4M-7 10q6 1 12 3M62 13q3 -2 6 -5M86 52q6 -0 12 -1M69 21q6 4 12 5M163 91q-0 7 -4 13M94 94q4 2 8 6M5 35q6 1 10 -3M186 86q5 4 9 10M165 39q6 5 11 10M31 87q6 -2 13 -2M159 35q4 4 2 9M76 14q6 -3 12 -2M62 27q4 -5 11 -7M24 44q4 2 8 -0M74 51q4 2 9 1M7 80q6 -1 12 -1M60 36q5 -6 11 -10M176 21q0 5 3 10" stroke="#8fb13c" stroke-width="3" stroke-linecap="round" fill="none"/><path d="M90 20q3 4 8 4M5 86q4 -3 9 -2M77 77q6 -0 13 -1M47 82q4 1 9 1" stroke="#e8622a" stroke-width="3" stroke-linecap="round" fill="none"/><path d="M91 68q5 -2 9 -5M71 37q6 -2 12 -4M188 64q-5 6 -6 14M-3 57q3 -5 8 -8M63 15q6 1 12 3M64 16q6 -2 11 -5M80 54q5 1 9 4M66 50q4 1 7 4M86 80q6 3 13 3M111 27q-2 4 -2 8M46 48q4 4 9 4M105 15q-2 4 -4 9M74 45q4 -2 7 0M166 52q0 6 -3 11M66 23q4 -2 8 -0M62 42q5 -1 8 3M30 74q4 -2 6 -6M77 79q4 2 7 1M108 50q-5 3 -8 9M69 36q6 -1 12 -0M67 94q4 -3 9 -6M30 7q7 3 12 8M142 4q-2 6 -7 10" stroke="#6f9a2a" stroke-width="3" stroke-linecap="round" fill="none"/><path d="M146 17q1 4 -2 7M-6 29q4 -0 7 -3M184 48q-1 4 -4 6M149 70q-1 5 -2 11M141 29q5 5 11 10M156 26q-2 5 -7 9M185 85q2 4 4 8M119 -2q3 5 7 9M141 79q3 3 4 6M197 3q4 1 5 6M152 70q-1 5 -3 9M65 60q6 -4 13 -6M134 61q3 5 7 10M156 45q-3 5 -7 9" stroke="#4a1a12" stroke-width="3" stroke-linecap="round" fill="none"/><path d="M192 72q3 6 9 9M132 52q-0 5 -3 9M183 4q5 5 8 12M109 2q1 7 4 13M136 10q3 7 1 14M202 -3q1 7 -2 13M195 66q-2 4 -6 7M98 74q-1 7 3 13M138 -3q0 5 -1 9M194 16q-2 4 0 9M172 74q2 7 8 11M187 70q2 7 0 15" stroke="#8e1614" stroke-width="3" stroke-linecap="round" fill="none"/><path d="M6 22q5 -5 10 -8M121 20q-0 7 0 15M170 75q-1 5 -1 10M-3 64q4 -1 8 -1M117 74q3 4 2 8M158 17q-0 4 1 7M76 81q5 -2 10 -5M15 86q6 1 12 -2M68 33q7 2 14 -1M-4 15q6 -1 11 2M27 56q4 -2 7 -3M4 12q4 -5 10 -7M143 7q-2 8 1 15M116 81q-0 5 -1 9M56 2q7 2 14 1M86 98q3 -4 7 -6M150 56q-1 7 -3 15M68 96q4 1 7 -2M9 40q4 1 8 5M167 34q4 6 5 13M26 83q8 0 14 5M63 40q5 -3 9 -7M48 86q6 3 13 4M48 48q4 -3 8 -6M34 96q4 1 7 1M90 67q7 0 12 3M172 76q1 4 -0 8" stroke="#557f1f" stroke-width="3" stroke-linecap="round" fill="none"/><path d="M76 94q4 -2 9 -1M82 55q5 1 10 3M13 26q6 0 11 2M49 65q5 -2 8 -7M132 84q4 5 3 11M117 60q-1 6 -5 10M5 83q4 1 9 3M2 95q6 3 12 6M138 31q4 5 6 11M110 4q-2 5 -3 11M30 94q3 3 7 4M-7 29q3 -4 8 -3M140 45q2 5 -0 11M67 68q7 -2 14 -3M37 9q4 -1 8 -0M49 6q5 4 12 3M163 87q-2 6 -7 9M14 -1q4 -2 9 0M56 -0q6 1 12 3M23 88q6 -2 11 1M93 83q5 1 10 2M48 31q5 -5 12 -8M60 82q5 1 11 2M112 -2q3 4 1 9M149 26q1 6 5 11M183 74q3 3 2 8M123 51q2 6 1 12" stroke="#a9c24e" stroke-width="3" stroke-linecap="round" fill="none"/><path d="M42 21q6 -4 10 -10M-1 -3q5 4 11 4M4 31q2 -4 6 -4M57 85q5 -1 9 -5M138 37q-3 6 -6 13M188 55q-3 7 -4 14M43 71q4 -1 7 -3M185 10q0 5 -1 10" stroke="#e2552c" stroke-width="3" stroke-linecap="round" fill="none"/><path d="M7 29q2 4 7 3M185 85q-1 4 1 7M120 37q3 5 2 11M129 50q-2 4 -5 9M6 49q6 2 12 4M1 74q4 -2 7 -5M87 23q6 3 13 1M189 -0q-4 4 -7 9" stroke="#b8201a" stroke-width="3" stroke-linecap="round" fill="none"/><path d="M198 17q-3 3 -3 7M145 89q-4 7 -4 14M194 26q-1 6 -3 12M141 68q-3 5 -4 12M168 -4q-1 5 1 10M165 -2q1 7 1 13M28 79q3 -3 7 -5M183 -8q-4 6 -4 13M71 27q3 1 6 4M181 26q4 4 5 10M181 90q-1 6 -5 11M112 67q-2 5 -5 10M159 35q5 4 8 9M203 74q-3 4 -3 9" stroke="#1f2a0c" stroke-width="3" stroke-linecap="round" fill="none"/><path d="M1 88q3 4 9 5M11 10q4 -1 8 1M82 84q4 0 9 2M196 86q1 5 4 9M24 25q3 -1 7 -1M23 -1q5 5 12 7M12 69q5 -2 9 -6M169 6q-2 6 -6 10M19 -1q8 0 14 4M106 -6q-3 4 -5 9M41 83q4 -2 8 -0M28 58q7 -3 12 -9M90 51q7 -1 13 -5M156 50q-2 6 -1 13M153 71q-2 5 -0 10M2 37q7 -0 14 -0M18 64q5 0 9 2M101 65q-1 6 1 11M124 7q6 2 8 7M44 15q5 -1 10 1M-8 63q7 -1 11 -6M12 7q5 -6 10 -10" stroke="#5e8c22" stroke-width="3" stroke-linecap="round" fill="none"/><path d="M191 -0q-2 5 -0 11M96 24q4 4 8 7M177 18q2 5 6 7M145 79q1 5 -0 9M168 3q1 7 -1 14M147 -1q2 6 6 9M105 67q3 5 0 9M182 41q-1 6 -2 13M140 31q5 3 8 9M191 16q-4 3 -4 8M153 24q1 6 6 10" stroke="#7a1210" stroke-width="3" stroke-linecap="round" fill="none"/><path d="M103 67q-5 6 -7 13M88 91q5 -1 10 2M192 3q0 5 2 11M133 63q-1 4 -4 8M119 -8q1 5 1 11M123 43q-3 4 -2 9M35 18q4 -3 8 -2M119 25q1 6 2 11M86 8q7 2 13 6" stroke="#de4426" stroke-width="3" stroke-linecap="round" fill="none"/><path d="M155 18q-4 5 -5 12M64 11q5 0 10 1M23 76q5 -2 11 -3M61 68q6 0 10 -3M105 61q3 4 6 8M2 23q4 3 8 3M77 60q7 3 14 2M4 64q7 -2 14 -0M189 45q-2 7 -6 12M56 43q5 3 10 5M3 -3q5 3 10 6M54 45q7 0 13 5M27 54q6 2 11 0M47 13q6 2 11 6M23 37q4 4 10 3M47 26q4 -4 9 -7M134 87q-0 7 -2 13M29 75q6 -1 12 1M44 90q7 1 13 -2M80 93q7 -0 13 -1M-8 13q6 0 11 -3M72 42q4 -1 8 1" stroke="#7da332" stroke-width="3" stroke-linecap="round" fill="none"/><path d="M68 51q6 3 12 7M22 26q4 3 10 5M180 46q-5 5 -9 11M125 31q-2 6 -7 10M128 69q-1 6 -3 11M-1 73q6 -0 11 -2M129 41q6 3 11 10" stroke="#a51a18" stroke-width="3" stroke-linecap="round" fill="none"/><path d="M44 5q6 -0 11 2M79 61q5 -1 8 -4M57 52q6 -5 13 -5M92 50q4 -0 7 1M42 11q6 4 12 8M11 11q7 -2 13 -1M13 74q5 4 11 4M-2 34q3 -4 7 -6M136 55q1 4 -0 8M157 16q2 4 5 5M2 42q7 -2 12 -6M23 27q4 -3 8 -3M50 37q5 5 12 6M27 51q2 -4 7 -6M74 8q5 -1 8 -5M34 44q6 -0 12 0M17 87q6 1 11 -2M31 82q4 -2 7 -5M155 23q2 5 1 11M35 12q3 3 6 4M28 82q7 -2 12 -7M125 77q3 3 7 7M165 35q-1 4 -0 7M6 25q5 1 10 3M48 96q5 -2 10 -5" stroke="#9bb43a" stroke-width="3" stroke-linecap="round" fill="none"/><path d="M122 66q-1 5 1 11M140 40q-2 6 -3 11M148 57q-5 6 -6 14M105 41q2 5 5 8M113 30q-0 5 -2 10M169 46q1 5 1 10M121 90q5 2 6 7M101 45q1 5 -2 9M139 26q4 6 10 11M184 -3q-3 4 -4 10M184 23q-1 6 -4 11M180 67q3 5 2 11M201 4q-1 5 -5 8M109 46q1 5 -2 9M111 -7q6 4 10 9M175 14q-3 4 -5 7M141 29q3 4 6 6" stroke="#a81c18" stroke-width="3" stroke-linecap="round" fill="none"/><path d="M27 85q4 -1 9 1M93 -1q4 1 7 2M-5 58q7 -2 15 -1M91 97q4 -0 7 -2M77 29q4 -1 8 -1" stroke="#ea7f2a" stroke-width="3" stroke-linecap="round" fill="none"/><path d="M164 1q-5 4 -7 10M183 66q-4 4 -4 9M102 30q-1 6 2 12M194 20q-2 4 -6 8M185 11q-1 3 -1 7M104 63q-4 5 -4 11M19 -3q4 -2 8 -0M164 54q-1 6 -6 8M185 41q1 4 1 8M125 54q4 4 8 8M122 41q-1 4 -1 9M189 47q3 6 1 13M154 58q5 4 9 8M192 45q2 5 4 11M129 78q4 5 6 11" stroke="#23260c" stroke-width="3" stroke-linecap="round" fill="none"/><path d="M187 -8q6 3 9 9M99 87q1 5 2 11M171 12q0 7 4 12M174 55q0 4 -1 7M140 54q6 4 8 10M183 1q-1 7 -0 14M186 32q-1 6 0 12M177 5q-4 4 -6 9M163 75q3 6 9 9M137 91q-2 5 -4 11M121 21q2 3 4 6" stroke="#b8241a" stroke-width="3" stroke-linecap="round" fill="none"/><path d="M150 25q6 5 9 11M50 98q4 1 7 1M178 44q5 2 7 7M112 44q-0 7 -3 14M123 34q-2 5 0 9M148 31q6 3 9 10M108 14q4 5 4 11M103 -6q4 5 7 10M45 62q5 2 11 1" stroke="#c92a1e" stroke-width="3" stroke-linecap="round" fill="none"/><path d="M47 48q5 1 10 3M26 61q6 -2 12 -4M23 35q5 1 11 1" stroke="#f09a3a" stroke-width="3" stroke-linecap="round" fill="none"/><path d="M171 45q-0 4 -1 7M166 65q-1 5 2 10M111 87q-1 4 1 7M193 22q-3 4 -6 8M159 33q3 2 4 6M188 28q0 7 2 14M168 51q1 6 3 13M198 66q2 3 3 7M129 51q-1 7 0 13M148 13q-4 7 -9 12M-8 6q7 1 13 4" stroke="#3a1410" stroke-width="3" stroke-linecap="round" fill="none"/><path d="M138 -4l-1 7M86 22l7 3M40 27l5 -3M142 35l-2 6M93 66l5 -3M136 32l1 6M194 18l-2 4M8 19l5 -4M195 60l4 5M149 28l3 5M125 74l2 7M21 44l5 3M120 23l0 7M161 85l4 4M47 68l3 -2M118 6l-4 6M161 3l-3 5M-3 73l7 -1M88 74l5 -1M77 15l4 1M167 82l3 5M72 96l6 2M50 62l7 1M155 53l-1 5M196 18l-2 4M66 11l5 1M113 35l4 5M91 46l7 0M96 59l5 5M51 11l6 -2M83 55l5 2M73 36l6 -2M118 11l-3 6M131 43l5 5M182 17l2 7M80 24l5 1M184 87l0 4M34 32l4 1M176 84l-2 6M138 1l0 6M33 65l4 -0M167 59l-2 7M12 9l4 0M152 27l4 6M138 42l-2 6M156 18l2 5M25 74l5 -2M-1 63l4 -1M12 86l4 -3M43 54l4 -0M17 38l5 -2M127 -3l0 5M145 81l1 7M85 49l5 0M62 94l4 -3M50 62l4 -3M181 -6l2 4M5 2l5 -1M38 94l4 1M148 47l1 3M68 30l4 -1M75 56l5 -1M94 50l4 1M-4 14l6 -0M15 2l4 -2M77 36l4 -2M1 -3l5 2M70 76l4 -1M71 30l6 -3M91 20l4 2M60 22l3 -1M162 83l2 5M50 79l4 2M98 25l4 4M47 18l4 -0M185 67l-3 7M162 34l-3 6M83 84l4 1M115 62l-2 5M144 10l0 7M130 75l1 6M106 63l3 4M35 85l4 0M90 91l5 1M136 89l-3 7M82 44l5 -1M75 82l6 3M122 85l-1 4M191 91l1 6M66 15l6 1M99 89l1 5M129 20l3 5M193 93l3 5M95 79l5 1M81 9l6 3M110 1l3 3M157 18l-4 4M132 36l-3 3M196 88l2 5M68 39l5 1M56 50l6 -0M67 58l6 -3M32 8l3 -2M158 36l2 5M196 79l2 3M134 94l3 3M102 32l1 6M112 19l3 6M18 72l3 2M15 75l6 2M66 14l6 -2M106 42l2 4M195 92l1 6M136 55l5 5M139 -3l-2 3M-4 45l7 -0M166 35l1 4M78 16l4 -1M41 62l6 0M25 0l6 4M177 67l-1 5M49 48l5 2M132 -6l-4 6M37 -4l4 3M186 25l3 5M4 23l4 2M159 11l2 4M198 8l-4 6M71 32l7 -1M121 5l2 5M130 63l-3 4M94 -2l4 1M185 43l1 6M187 20l1 6M75 34l6 0M148 92l-1 7M166 66l1 5M159 44l-2 4M119 39l1 6M171 14l2 6M59 84l4 -2M149 43l5 5M137 12l2 3M155 15l1 5M47 -2l4 -3M132 64l-2 4M185 56l-1 4M154 27l-4 4M158 17l3 3M181 68l-1 6M-1 55l7 1M143 43l-0 5M86 44l3 2M88 81l6 2M22 68l7 0M7 80l5 -1M174 87l5 5M151 73l-3 5M-1 16l5 -3M157 48l-2 4M123 10l-2 5M-2 18l5 2M79 60l7 1M199 74l-0 4M194 62l-3 5M140 47l-0 5M23 61l4 2M56 39l4 -3M153 27l-4 6M34 26l6 -2M19 77l4 0M102 65l-2 5M22 -1l7 2M132 34l1 6M173 44l3 3M182 85l-4 6M121 28l3 3M144 74l1 4M168 -3l1 5M135 13l0 7M53 37l6 2M147 27l-2 5M54 91l3 -3M94 36l4 -4M104 -5l-2 5M116 65l0 4M118 29l4 3M143 79l4 5M192 87l-3 6M4 95l6 2M133 64l-1 6M74 -1l5 -5M79 77l6 1M161 94l-2 7M171 92l-4 6M65 73l4 2M105 3l-1 5M187 47l-3 6M161 20l1 4M110 46l-2 7M29 71l3 -3M162 55l-3 4M52 38l6 3M120 -0l3 4M6 9l5 -4M90 16l3 1M177 28l3 5M17 1l4 -3M113 17l-2 7M69 39l4 2M118 64l5 4M144 52l-3 6M72 4l5 1M30 55l6 -5M69 23l5 3M172 -2l2 5M22 87l5 3M185 5l2 3M57 44l5 3M69 45l5 -1M148 43l4 4M-1 20l5 -0M84 52l6 -3M183 69l3 3M81 58l5 -4M153 44l-1 3M153 72l4 4M198 77l-0 6M126 8l1 6M80 24l6 -0M120 91l-2 3M65 82l4 -1M15 27l5 -2M76 6l4 -2M157 -6l4 5M122 35l0 4M141 80l2 3M100 46l-1 5M187 95l2 4M91 26l5 -2M190 79l3 5M100 40l0 5M52 5l3 -2M159 53l-2 4M143 90l-4 6M53 80l6 -2M148 74l-2 6M72 90l5 -1M188 86l2 5M12 87l5 3M121 42l-1 4M57 4l4 -4M154 29l3 4M140 19l5 5M107 48l3 4M122 45l-1 4M121 31l-1 4M161 89l-4 4M5 14l6 0M168 78l4 6M110 15l1 6M169 34l3 5M114 19l2 5M15 -2l4 0M47 12l6 3M57 46l6 3M78 2l4 -1M95 3l5 2M98 76l1 6M11 35l6 3M183 -1l-2 5M67 22l4 -0M153 59l4 6M95 98l6 -3M100 -3l4 4M108 -4l-5 6M-2 40l5 3M138 82l4 4M173 77l-4 6M63 42l4 1M153 61l-0 4M-1 54l4 -2M177 78l2 5M109 20l1 5M123 33l-3 5M2 72l4 -3M188 31l1 7M89 94l5 2M90 81l3 -3M31 72l3 -3M95 82l5 1M50 14l6 3M133 10l1 3M178 71l4 3M182 25l-2 6M92 49l3 2M127 30l0 4M189 91l-1 4M102 13l4 4M172 27l-1 6M58 95l4 -0M154 25l1 5M168 54l1 6M137 -1l-0 4M51 38l4 -2M18 49l4 -1M145 18l-1 4M131 19l-1 4M59 16l4 -0M53 41l4 3M139 30l-4 6M23 68l5 -3M120 66l4 4M19 15l5 -3M180 92l-2 6M24 37l5 2M33 32l5 -3M105 52l-4 4M170 21l-2 3M36 17l4 -1M169 44l4 4M56 80l6 2M48 23l4 -3M200 18l-3 4M84 45l3 -3M49 82l4 0M31 50l5 -3M30 68l5 -4M129 54l0 7M64 25l5 -4M175 7l-3 5M29 84l7 2M112 38l-4 6M19 78l6 -0M63 7l6 1M128 37l-1 5M22 3l4 -1M100 -4l2 3M121 87l-2 4M108 39l-1 4M170 11l0 4M147 76l-3 5M130 -5l3 3M189 17l-2 4M77 67l5 0M73 63l5 -3M25 43l4 -0M165 76l5 4M92 22l6 1M160 95l-3 3M75 22l7 -1M123 88l2 5M158 -5l4 4M181 13l2 3M125 9l4 4M42 -1l4 -1M136 64l-1 5M141 76l-3 7M173 76l4 6M123 88l-4 5M169 35l5 5M-1 58l4 3M124 73l4 6M24 21l3 -1M45 14l5 0M135 63l3 5M-5 48l3 -3M113 59l2 6M141 37l-0 5M50 86l7 2M72 97l7 0M148 68l-4 5M16 11l5 -0M-5 6l6 2M161 74l-1 4M25 -2l7 1M110 47l-1 5M52 56l7 -0M77 96l6 2M-0 86l6 2M44 57l7 1M69 74l4 -0M33 8l6 4M128 28l-3 7M97 61l3 6M68 32l4 -3M101 82l-3 7M88 9l6 3M135 93l-2 5M56 52l6 0M34 12l7 0M7 25l5 1M160 37l4 5M13 63l6 1M176 5l-1 4M-3 77l6 1M14 4l5 -5M121 22l2 3M129 85l0 6M67 21l5 3M184 1l4 6M46 17l6 -3M170 68l4 5M62 82l4 -3M89 65l5 0M176 74l-1 5" stroke="#e8f0a0" stroke-width=".8" stroke-linecap="round" fill="none" opacity=".3"/><path d="M170 0H197.500V14C188 8 178 4 170 0Z" fill="#1a0c08" opacity=".7"/><path d="M62 0C70 6 81 9 80 16C79 23 80 28 76 33C68 41 58 42 50 47C40 53 32 58 26 64C18 73 10 84 3 94L72 94C82 88 91 85 95 79C100 72 104 66 106 60C110 52 115 46 115 39C116 30 117 22 116 15C115 9 112 4 110 0Z" fill="#dcdde3" opacity=".95"/><path d="M86 6C94 20 98 30 93 42C86 58 60 68 42 94" stroke="#f1f2f6" stroke-width="10" fill="none" opacity=".6"/><path d="M105 6C111 24 110 40 101 56C93 70 78 80 64 94" stroke="#c3c4cc" stroke-width="5" fill="none" opacity=".6"/><path d="M70 30C64 40 50 48 40 56C30 64 20 78 12 94" stroke="#c9cad2" stroke-width="4" fill="none" opacity=".6"/><path d="M56 60C66 56 78 58 86 66C80 76 66 82 54 78Z" fill="#dba7a0" opacity=".45"/><path d="M72 8C77 18 79 27 73 35" stroke="#f6f6fa" stroke-width="4" fill="none" opacity=".6"/><path d="M90 60C96 70 92 82 84 94H100C108 86 112 76 108 64Z" fill="#d86a50" opacity=".35"/></svg>
<svg style="left:0.00px;top:263.00px;" width="197.50" height="93.80" viewBox="0 0 197.5 94"><defs><linearGradient id="mg1" x1="0" y1="0" x2="0" y2="1"><stop offset="0" stop-color="#f0a083"/><stop offset=".22" stop-color="#e8977b"/><stop offset=".4" stop-color="#d38570"/><stop offset="1" stop-color="#8a5a40"/></linearGradient></defs><rect width="197.5" height="94.0" fill="url(#mg1)"/><path d="M0 20C20 17 40 22 60 25C90 28 110 25 140 28C160 30 180 28 198 27V94H0Z" fill="#d98a74" opacity=".85"/><path d="M0 26C14 23 26 28 40 30C56 33 70 37 90 40C110 44 130 42 150 44C170 46 186 44 198 46V94H0Z" fill="#b46f62"/><path d="M0 38C12 36 24 38 36 40C50 44 62 46 76 46C96 48 120 50 150 52C170 54 186 54 198 54V94H0Z" fill="#9c5f58"/><path d="M0 52C8 48 20 44 32 43C44 42 56 48 66 54C80 58 92 58 104 57C124 58 150 60 198 62V94H0Z" fill="#875046"/><path d="M0 62C20 60 40 64 60 68C80 72 100 72 120 72C150 72 170 68 198 66V94H0Z" fill="#80503c"/><path d="M0 72C14 72 28 76 42 80C56 84 62 88 70 90L198 90V94H0Z" fill="#6a3c26"/><path d="M44 94C58 88 70 84 84 82C100 78 116 77 130 75C150 72 170 70 198 64V94Z" fill="#6a4920"/><path d="M112 80C130 74 150 74 165 72C180 68 190 66 198 64V94H100Z" fill="#4a3714" opacity=".85"/><path d="M0 78C10 80 22 84 30 90L34 94H0Z" fill="#5e3a24" opacity=".8"/><ellipse cx="69.600" cy="65.600" rx="2.300" ry="2.600" fill="#2a1c18"/><path d="M66 69.500C68 68 71 68 72.500 69.500L73 82L72 94H67.500L67 82C64 82 62.500 79 63 76C63.500 73 64.500 71 66 69.500Z" fill="#2a1c18"/></svg>
<svg style="left:0.00px;top:356.80px;" width="197.50" height="93.80" viewBox="0 0 197.5 94"><defs><filter id="mkb" x="-10%" y="-10%" width="120%" height="120%"><feGaussianBlur stdDeviation="1.6"/></filter><filter id="mkb2" x="-10%" y="-10%" width="120%" height="120%"><feGaussianBlur stdDeviation="0.7"/></filter><radialGradient id="mkf" cx=".45" cy=".5" r=".6"><stop offset="0" stop-color="#e4d2cc"/><stop offset=".6" stop-color="#cdb5ac"/><stop offset="1" stop-color="#9c8577"/></radialGradient></defs><rect width="197.5" height="94.0" fill="#1aa7a1"/><g filter="url(#mkb)"><path d="M0 0H198V16C160 6 120 6 90 8C60 10 30 16 0 26Z" fill="#27b5ae"/><path d="M0 30C20 24 34 30 44 44C40 60 30 70 0 66Z" fill="#22b0aa"/><path d="M0 72C40 88 100 96 198 78V94H0Z" fill="#11918c"/><path d="M140 12C160 10 180 8 194 12C186 18 160 20 142 18Z" fill="#0f7e7a"/><path d="M124 36C140 30 158 36 164 50C166 62 156 72 140 74C128 76 118 70 112 64Z" fill="#106f6b"/><path d="M60 84C90 92 130 90 160 76C150 90 100 98 60 90Z" fill="#0c7f7a"/><path d="M96 42C108 40 122 44 130 54C134 66 124 76 108 78C98 78 92 70 92 58Z" fill="#4a3a2a"/><path d="M104 40C116 36 128 40 136 48C130 52 118 52 106 50Z" fill="#6b5a48"/></g><g filter="url(#mkb2)"><ellipse cx="98" cy="27" rx="19" ry="18" fill="#8a8680"/><path d="M80 24C84 12 96 8 108 12C114 16 116 22 114 26C104 20 92 20 80 24Z" fill="#9aa0a4"/><ellipse cx="105" cy="35" rx="11" ry="10" fill="#b89683"/><path d="M96 28C100 26 104 27 106 29M108 28C111 26 114 27 116 29" stroke="#3a2a20" stroke-width="1.500" fill="none"/><ellipse cx="101" cy="31.500" rx="2.200" ry="1.400" fill="#c88a2a"/><ellipse cx="111" cy="31" rx="2.200" ry="1.400" fill="#c88a2a"/><ellipse cx="110" cy="41" rx="4" ry="3" fill="#c7a294"/><ellipse cx="71" cy="53" rx="27" ry="27.500" fill="url(#mkf)"/><path d="M46 44C50 30 64 24 80 27C90 30 96 36 97 44C86 36 66 34 46 44Z" fill="#9c8266"/><path d="M44 62C42 70 46 78 54 82C50 74 48 68 48 60Z" fill="#a08c80"/><path d="M58 40C63 37 69 38 73 41M79 42C84 39 90 40 93 43" stroke="#4a382c" stroke-width="1.700" fill="none"/><ellipse cx="66" cy="43.200" rx="3.200" ry="1.500" fill="#c08a2e"/><ellipse cx="84" cy="44.800" rx="3.200" ry="1.500" fill="#c08a2e"/><path d="M74 46C75 52 77 56 76 59C74 61 71 61 69 59" stroke="#8a6e66" stroke-width="1.500" fill="none"/><ellipse cx="72" cy="64" rx="9" ry="6" fill="#d9c4bc"/><path d="M66 66C70 67.500 75 67.500 79 66" stroke="#8e746c" stroke-width="1" fill="none"/><path d="M48 76C58 84 84 86 100 78C96 72 60 72 48 76Z" fill="#c5b0a6"/></g><ellipse cx="122.8" cy="7.9" rx="0.8" ry="0.9" fill="#dff3ea" opacity=".75" transform="rotate(-27 122.8 7.9)"/><ellipse cx="140.4" cy="50.7" rx="1.7" ry="0.7" fill="#dff3ea" opacity=".75" transform="rotate(50 140.4 50.7)"/><ellipse cx="31.1" cy="59.1" rx="2.2" ry="0.8" fill="#dff3ea" opacity=".75" transform="rotate(34 31.1 59.1)"/><ellipse cx="4.9" cy="72.0" rx="1.1" ry="1.0" fill="#dff3ea" opacity=".75" transform="rotate(-55 4.9 72.0)"/><ellipse cx="60.1" cy="4.8" rx="2.2" ry="0.7" fill="#dff3ea" opacity=".75" transform="rotate(32 60.1 4.8)"/><ellipse cx="179.6" cy="36.9" rx="2.1" ry="0.7" fill="#dff3ea" opacity=".75" transform="rotate(33 179.6 36.9)"/><ellipse cx="156.6" cy="42.0" rx="2.3" ry="0.9" fill="#dff3ea" opacity=".75" transform="rotate(-48 156.6 42.0)"/><ellipse cx="8.9" cy="46.5" rx="1.2" ry="0.8" fill="#dff3ea" opacity=".75" transform="rotate(39 8.9 46.5)"/><ellipse cx="133.6" cy="85.6" rx="2.2" ry="1.0" fill="#dff3ea" opacity=".75" transform="rotate(25 133.6 85.6)"/><ellipse cx="192.7" cy="26.0" rx="1.0" ry="0.7" fill="#dff3ea" opacity=".75" transform="rotate(21 192.7 26.0)"/><ellipse cx="193.0" cy="10.0" rx="2.1" ry="0.7" fill="#dff3ea" opacity=".75" transform="rotate(-41 193.0 10.0)"/><ellipse cx="5.9" cy="40.4" rx="1.5" ry="0.6" fill="#dff3ea" opacity=".75" transform="rotate(17 5.9 40.4)"/><ellipse cx="120.6" cy="6.0" rx="1.9" ry="0.7" fill="#dff3ea" opacity=".75" transform="rotate(52 120.6 6.0)"/><ellipse cx="179.9" cy="27.1" rx="1.2" ry="0.5" fill="#dff3ea" opacity=".75" transform="rotate(-60 179.9 27.1)"/><ellipse cx="16.9" cy="56.0" rx="0.9" ry="0.6" fill="#dff3ea" opacity=".75" transform="rotate(-8 16.9 56.0)"/><ellipse cx="135.1" cy="90.2" rx="1.3" ry="0.7" fill="#dff3ea" opacity=".75" transform="rotate(-43 135.1 90.2)"/><ellipse cx="175.1" cy="36.0" rx="1.5" ry="0.8" fill="#dff3ea" opacity=".75" transform="rotate(22 175.1 36.0)"/><ellipse cx="169.3" cy="63.3" rx="1.0" ry="1.0" fill="#dff3ea" opacity=".75" transform="rotate(43 169.3 63.3)"/><ellipse cx="141.0" cy="23.4" rx="1.3" ry="1.0" fill="#dff3ea" opacity=".75" transform="rotate(6 141.0 23.4)"/><ellipse cx="154.2" cy="90.9" rx="1.3" ry="0.7" fill="#dff3ea" opacity=".75" transform="rotate(15 154.2 90.9)"/><ellipse cx="124.0" cy="7.4" rx="1.8" ry="0.7" fill="#dff3ea" opacity=".75" transform="rotate(26 124.0 7.4)"/><ellipse cx="179.0" cy="56.8" rx="1.2" ry="0.7" fill="#dff3ea" opacity=".75" transform="rotate(15 179.0 56.8)"/><ellipse cx="13.7" cy="62.8" rx="2.3" ry="0.6" fill="#dff3ea" opacity=".75" transform="rotate(-2 13.7 62.8)"/><ellipse cx="36.2" cy="18.7" rx="2.0" ry="0.9" fill="#dff3ea" opacity=".75" transform="rotate(-27 36.2 18.7)"/><path d="M2 74C14 80 30 86 46 91" stroke="#cfeee8" stroke-width="1.500" fill="none" opacity=".7"/><path d="M34 14C36 22 40 28 46 32" stroke="#bfeee6" stroke-width="1.500" fill="none" opacity=".6"/><path d="M84 6C92 4 100 6 106 10" stroke="#d8f4ee" stroke-width="1.500" fill="none" opacity=".6"/></svg>
<div class="abs" style="left:197.50px;top:169.00px;width:126.50px;height:94.40px;background:#fdc658;"></div>
<div class="abs" style="left:197.50px;top:356.80px;width:126.50px;height:93.80px;background:#ebebeb;"></div>
<div class="osw" style="left:219.10px;top:205.59px;font-size:16.90px;color:#27552a;transform:scaleX(0.6762);font-weight:normal;-webkit-text-stroke:0.50px #27552a;">5 SPICIEST</div>
<div class="osw" style="left:219.10px;top:221.79px;font-size:16.90px;color:#27552a;transform:scaleX(0.6612);font-weight:normal;-webkit-text-stroke:0.50px #27552a;">DISHES</div>
<div class="abs" style="left:217.30px;top:200.20px;width:65.40px;height:34.00px;background:transparent;border:1px solid #b3bec6"></div>
<div class="osw" style="left:218.30px;top:306.79px;font-size:16.90px;color:#141414;transform:scaleX(0.6352);font-weight:normal;-webkit-text-stroke:0.50px #141414;">THE BEATEN</div>
<div class="osw" style="left:218.30px;top:322.29px;font-size:16.90px;color:#141414;transform:scaleX(0.7260);font-weight:normal;-webkit-text-stroke:0.50px #141414;">Trail</div>
<div class="osw" style="left:218.00px;top:385.71px;font-size:16.76px;color:#0a4b38;transform:scaleX(0.6783);font-weight:normal;-webkit-text-stroke:0.50px #0a4b38;">CATCH THE</div>
<div class="osw" style="left:218.00px;top:401.61px;font-size:16.76px;color:#0a4b38;transform:scaleX(0.7206);font-weight:normal;-webkit-text-stroke:0.50px #0a4b38;">SWIMMING</div>
<div class="osw" style="left:218.00px;top:417.11px;font-size:16.76px;color:#0a4b38;transform:scaleX(0.6729);font-weight:normal;-webkit-text-stroke:0.50px #0a4b38;">MONKEYS</div>
<svg style="left:0.00px;top:0.00px;" width="324.00" height="576.00" viewBox="0 0 324 576"><path transform="translate(59.8 497.7) scale(.72)" d="M9.200 24V13.200H13l.6-4.300H9.200V6.200c0-1.200.4-2.100 2.200-2.100h2.300V.2C13.300.1 12 0 10.400 0 7.100 0 4.900 2 4.900 5.600v3.300H1.200v4.300h3.700V24z" fill="#0a4b38"/><g transform="translate(124.6 506.6)" fill="none" stroke="#0a4b38"><rect x="-8.400" y="-8.400" width="16.800" height="16.800" rx="4.600" stroke-width="1.700"/><circle r="4.200" stroke-width="1.700"/><circle cx="5" cy="-5" r="1.100" fill="#0a4b38" stroke="none"/></g><g transform="translate(191.7 506.6)"><rect x="-11" y="-7.700" width="22" height="15.400" rx="4" fill="#0a4b38"/><path d="M-2.600 -3.600L3.600 0L-2.600 3.600Z" fill="#fff"/></g><path transform="translate(243.2 499.2) scale(.79)" d="M24 2.300c-.9.400-1.800.700-2.800.800 1-.600 1.800-1.600 2.200-2.700-1 .600-2 1-3.100 1.200C19.300.6 18 0 16.600 0c-2.700 0-4.900 2.200-4.900 4.900 0 .400 0 .800.100 1.100C7.700 5.800 4.100 3.900 1.700.900 1.200 1.700 1 2.500 1 3.400c0 1.700.900 3.200 2.200 4.100-.800 0-1.600-.200-2.200-.600v.100c0 2.400 1.700 4.400 3.900 4.800-.400.100-.800.200-1.300.200-.300 0-.600 0-.900-.100.600 2 2.400 3.400 4.600 3.400-1.700 1.300-3.800 2.100-6.100 2.100-.400 0-.800 0-1.200-.100 2.200 1.400 4.800 2.200 7.500 2.200 9.100 0 14-7.500 14-14v-.600c1-.700 1.800-1.600 2.500-2.600z" fill="#0a4b38"/></svg>
</div>
<svg style="left:0.00px;top:0.00px;" width="1912.00" height="940.00" viewBox="0 0 1912 940"><path d="M1021.5 313.200H1345M1345 313V378.500M1218.500 313V378.500M1021.500 313V406.400H1142.500" fill="none" stroke="#6aa0e8" stroke-width="1.200"/><path d="M1182.800 300V313" stroke="#6aa0e8" stroke-width="1.200"/><rect x="1017.5" y="309.4" width="8" height="8" rx="2" fill="#161a1f" stroke="#6aa0e8" stroke-width="1"/><rect x="1341.2" y="309.4" width="8" height="8" rx="2" fill="#161a1f" stroke="#6aa0e8" stroke-width="1"/><rect x="1017.5" y="402.3" width="8" height="8" rx="2" fill="#161a1f" stroke="#6aa0e8" stroke-width="1"/><circle cx="1183.700" cy="287.400" r="15.200" fill="#131516" stroke="#3b5a88" stroke-width="1"/><path d="M1190.300 284.600A7.200 7.200 0 1 0 1190.900 289.600" fill="none" stroke="#e4e5e6" stroke-width="1.300"/><path d="M1191.300 279.800V285.200H1186" fill="none" stroke="#e4e5e6" stroke-width="1.300"/><circle cx="1183.200" cy="360.200" r="6.600" fill="#15181c" stroke="#6aa0e8" stroke-width="1.200"/></svg>
<div class="abs" style="left:1142.3px;top:378.2px;width:224.400px;height:79.200px;background:#131516;border:1px solid #34383a;border-radius:5px;box-shadow:0 2px 6px rgba(0,0,0,.4)"></div>
<div class="abs" style="left:1142.80px;top:421.40px;width:223.40px;height:27.40px;background:#4b5354;"></div>
<div class="t" style="left:1161.00px;top:392.67px;font-size:14.80px;color:#eeeeee;letter-spacing:-0.265px;-webkit-text-stroke:.4px #eeeeee;">Duplicate Elements</div>
<div class="t" style="left:1161.00px;top:426.67px;font-size:14.80px;color:#eeeeee;letter-spacing:-0.377px;-webkit-text-stroke:.4px #eeeeee;">Ungroup Layers</div>
<div class="abs" style="left:1132.3px;top:415.2px;width:246.900px;height:47.600px;border:4.800px solid #f80c0c;border-top-width:5.400px;border-radius:3px"></div>
<svg style="left:0.00px;top:0.00px;" width="1912.00" height="940.00" viewBox="0 0 1912 940"><g fill="none" stroke="#e4e5e6" stroke-width="1.400"><path d="M967 432.200H946M955.200 422.600L945.600 432.200L955.200 441.800"/><path d="M1399.400 432.200H1420.400M1411.200 422.600L1420.800 432.200L1411.200 441.800"/></g></svg>
<div class="sb" style="top:535.4px"></div>
<div class="sb" style="top:585.2px"></div>
<div class="sb" style="top:634.4px"></div>
<div class="sb" style="top:684.0px"></div>
<svg style="left:0.00px;top:0.00px;" width="1912.00" height="940.00" viewBox="0 0 1912 940"><g fill="none" stroke="#e4e5e6" stroke-width="1.300"><circle cx="1388" cy="553.400" r="8.600"/><path d="M1385.400 549.200L1392.400 553.400L1385.400 557.600Z" fill="#e4e5e6"/><circle cx="1388" cy="603.200" r="8.600"/><path d="M1388 598.600V607.800M1383.400 603.200H1392.600"/><rect x="1379.600" y="647" width="13.200" height="14" rx="1.500"/><path d="M1386.200 651V657M1383.200 654H1389.200"/><path d="M1383.400 644.600V643.800a1.500 1.500 0 0 1 1.500 -1.500H1395.200a1.500 1.500 0 0 1 1.500 1.500V655.400a1.500 1.500 0 0 1 -1.500 1.500H1394.600"/><path d="M1379.400 696.800H1396.800M1384.800 696.800V694.800a1.300 1.300 0 0 1 1.300 -1.300H1390.100a1.300 1.300 0 0 1 1.300 1.300V696.800M1381.400 698.400L1382.600 708.800a1.600 1.600 0 0 0 1.600 1.500H1392a1.600 1.600 0 0 0 1.600 -1.500L1394.800 698.400M1385.200 700.200V707.400M1388.200 700.200V707.400M1391.200 700.200V707.400"/></g></svg>

<div class="page" style="left:1482px;top:200.6px;width:255.400px;height:454px;background:#a3a3a3">
<div class="abs" style="left:30.10px;top:118.30px;width:67.50px;height:30.60px;background:#868686;"></div>
<div class="abs" style="left:30.10px;top:181.40px;width:63.90px;height:17.20px;background:#868686;"></div>
<div class="abs" style="left:30.10px;top:199.40px;width:27.70px;height:17.60px;background:#868686;"></div>
<div class="t" style="left:35.00px;top:121.21px;font-size:10.50px;color:#2a2a2a;letter-spacing:0.119px;">Fill in some</div>
<div class="t" style="left:35.00px;top:135.01px;font-size:10.50px;color:#2a2a2a;">text</div>
<div class="t" style="left:35.00px;top:184.51px;font-size:10.50px;color:#2a2a2a;letter-spacing:0.119px;">Fill in some</div>
<div class="t" style="left:35.00px;top:202.81px;font-size:10.50px;color:#2a2a2a;">text</div>
</div>

<div class="t" style="left:466.00px;top:27.65px;font-size:17.90px;color:#9a9d9f;letter-spacing:0.490px;">Add title</div>
<div class="btn" style="left:1631.2px;top:18px;width:35.800px;height:35.800px"></div>
<div class="btn" style="left:1675.9px;top:18px;width:35.800px;height:35.800px"></div>
<div class="btn" style="left:1720.8px;top:18px;width:35.800px;height:35.800px"></div>
<div class="btn" style="left:1765.8px;top:18px;width:35.800px;height:35.800px"></div>
<svg style="left:0.00px;top:0.00px;" width="1912.00" height="940.00" viewBox="0 0 1912 940"><g fill="none" stroke="#e4e5e6" stroke-width="1.400"><path d="M1640.300 39.600C1644.600 31.400 1653.600 31 1658.600 35.800"/><path d="M1639.600 32.600V40.200H1647"/></g><g fill="none" stroke="#6c7274" stroke-width="1.400"><path d="M1702.500 39.600C1698.200 31.400 1689.200 31 1684.200 35.800"/><path d="M1703.200 32.600V40.200H1695.800"/></g><g fill="none" stroke="#e4e5e6" stroke-width="1.400"><path d="M1729.400 36C1733.400 28.800 1744 28.800 1748 36C1744 43.200 1733.400 43.200 1729.400 36Z"/><circle cx="1738.700" cy="36" r="2.700"/></g><g fill="none" stroke="#e4e5e6" stroke-width="1.300"><path d="M1776.200 28.600a1.600 1.600 0 0 1 1.600 -1.600H1787.800L1791.400 31V43.400a1.600 1.600 0 0 1 -1.600 1.600H1777.800a1.600 1.600 0 0 1 -1.600 -1.600Z"/><path d="M1779.400 45V38.600a1.200 1.200 0 0 1 1.200 -1.200H1787a1.200 1.200 0 0 1 1.200 1.200V45M1785.800 28.200V31.800"/></g></svg>
<div class="abs" style="left:1811px;top:18px;width:91.200px;height:35.800px;background:#cbacff;border-radius:4.500px"></div>
<div class="t" style="left:1818.00px;top:26.99px;font-size:15.60px;color:#211c3c;letter-spacing:-0.161px;">Publish</div>
<svg style="left:0.00px;top:0.00px;" width="1912.00" height="940.00" viewBox="0 0 1912 940"><g fill="none" stroke="#2a2450" stroke-width="1.200"><circle cx="1881.400" cy="36.400" r="6.500"/><path d="M1881.400 32.400V37.600"/><circle cx="1881.400" cy="39.800" r=".5" fill="#2a2450"/></g></svg>

<div class="abs" style="left:948.2px;top:72.2px;width:469.700px;height:58.600px;background:#26292a;border-radius:8.500px;box-shadow:0 1px 3px rgba(0,0,0,.3)"></div>
<svg style="left:0.00px;top:0.00px;" width="1912.00" height="940.00" viewBox="0 0 1912 940"><g transform="translate(978.00 101.00)"><path d="M-5.6 -8.8V8.8M5.6 -8.8V8.8" stroke="#e4e5e6" stroke-width="1.4" fill="none"/><rect x="-2.3" y="-4.5" width="4.6" height="9" rx="1.2" fill="#e4e5e6"/></g><g transform="translate(1021.10 101.00)"><path d="M-8.9 -5.5H8.9M-8.9 5.5H8.9" stroke="#e4e5e6" stroke-width="1.4" fill="none"/><rect x="-4.7" y="-2.2" width="9.4" height="4.4" rx="1.2" fill="#e4e5e6"/></g><g transform="translate(1076.00 101.00)"><path d="M-5.5 -8.8V8.8" stroke="#e4e5e6" stroke-width="1.4" fill="none"/><rect x="-2.7" y="-2.2" width="9.2" height="4.4" rx="1.2" fill="#e4e5e6"/></g><g transform="translate(1119.10 101.00)"><path d="M0 -8.8V-3.6M0 3.6V8.8" stroke="#e4e5e6" stroke-width="1.4" fill="none"/><rect x="-4.7" y="-2.2" width="9.4" height="4.4" rx="1.2" fill="#e4e5e6"/></g><g transform="translate(1161.10 101.00)"><path d="M5.5 -8.8V8.8" stroke="#e4e5e6" stroke-width="1.4" fill="none"/><rect x="-6.5" y="-2.2" width="9.2" height="4.4" rx="1.2" fill="#e4e5e6"/></g><g transform="translate(1203.90 101.00)"><path d="M-8.9 -5.6H8.9" stroke="#e4e5e6" stroke-width="1.4" fill="none"/><rect x="-2.4" y="-2.9" width="4.8" height="8.8" rx="1.2" fill="#e4e5e6"/></g><g transform="translate(1247.00 101.00)"><path d="M-9 0H-3.8M3.8 0H9" stroke="#e4e5e6" stroke-width="1.4" fill="none"/><rect x="-2.4" y="-4.5" width="4.8" height="9" rx="1.2" fill="#e4e5e6"/></g><g transform="translate(1290.00 101.00)"><path d="M-8.9 5.5H8.9" stroke="#e4e5e6" stroke-width="1.4" fill="none"/><rect x="-2.4" y="-5.9" width="4.8" height="8.6" rx="1.2" fill="#e4e5e6"/></g><path d="M1049.400 79.800V119.400M1317.700 79.800V119.400" stroke="#3d4244" stroke-width="1.100"/><path d="M1347.63 108.85L1347.39 111.83L1342.61 111.83L1342.37 108.85L1339.87 107.41L1337.16 108.68L1334.77 104.55L1337.23 102.84L1337.23 99.96L1334.77 98.25L1337.16 94.12L1339.87 95.39L1342.37 93.95L1342.61 90.97L1347.39 90.97L1347.63 93.95L1350.13 95.39L1352.84 94.12L1355.23 98.25L1352.77 99.96L1352.77 102.84L1355.23 104.55L1352.84 108.68L1350.13 107.41Z" fill="none" stroke="#e4e5e6" stroke-width="1.700" stroke-linejoin="round"/><circle cx="1345.0" cy="101.4" r="3.500" fill="none" stroke="#e4e5e6" stroke-width="1.600"/><path d="M1378.900 93.200L1394.900 109.200M1394.900 93.200L1378.900 109.200" stroke="#e4e5e6" stroke-width="1.300"/></svg>

<div class="btn" style="left:464.4px;top:904.2px;width:75.4px;height:40px;border-color:#393d3f"></div>
<div class="btn" style="left:549.2px;top:904.2px;width:75.8px;height:40px;border-color:#393d3f"></div>
<div class="btn" style="left:634.1px;top:904.2px;width:42.8px;height:40px;border-color:#393d3f"></div>
<div class="btn" style="left:1516.5px;top:904.2px;width:41.2px;height:40px;border-color:#393d3f"></div>
<div class="btn" style="left:1567.6px;top:904.2px;width:89.2px;height:40px;border-color:#393d3f"></div>
<div class="btn" style="left:1666.4px;top:904.2px;width:42.2px;height:40px;border-color:#393d3f"></div>
<div class="btn" style="left:1718.2px;top:904.2px;width:129.2px;height:40px;border-color:#393d3f"></div>
<div class="btn" style="left:1854.7px;top:904.2px;width:40.8px;height:40px;border-color:#393d3f"></div>
<svg style="left:0.00px;top:0.00px;" width="1912.00" height="940.00" viewBox="0 0 1912 940"><g fill="none" stroke="#e4e5e6" stroke-width="1.300"><circle cx="484.700" cy="923.9" r="8.400"/><path d="M481.900 921.400a2.800 2.800 0 1 1 4.400 2.300c-1 .700-1.600 1.200-1.600 2.400"/><circle cx="484.700" cy="928.400" r=".6" fill="#e4e5e6"/><path d="M568.400 931.800H566.600a1.600 1.600 0 0 1 -1.600 -1.600V917.800a1.600 1.600 0 0 1 1.600 -1.600H573.200a1.600 1.600 0 0 1 1.600 1.600V925"/><path d="M571.400 928.400L574.400 931.400L579.800 925.800"/><rect x="645.400" y="917.200" width="19.600" height="13.400" rx="1.600"/><path d="M649 921.200H650.600M652.600 921.200H654.200M656.200 921.200H657.800M659.800 921.200H661.400M649 924.200H650.600M652.600 924.200H654.200M656.200 924.200H657.800M659.800 924.200H661.400M650 927.400H660.400" stroke-width="1.500"/><rect x="1527" y="919.600" width="20" height="8.600" rx="1.600"/><path d="M1531 923.900H1532.400M1534.400 923.900H1535.800M1537.800 923.900H1539.200M1541.200 923.900H1542.600" stroke-width="1.600"/><rect x="1679.2" y="915.4" width="7" height="7" rx="1.400"/><rect x="1689.6" y="915.4" width="7" height="7" rx="1.400"/><rect x="1679.2" y="925.8" width="7" height="7" rx="1.400"/><rect x="1689.6" y="925.8" width="7" height="7" rx="1.400"/><rect x="1866.400" y="915.400" width="17.400" height="17.400" rx="1.600"/><path d="M1870.600 928.400V920L1875.100 925.600L1879.600 920V928.400" stroke-width="1.200"/></g><path d="M1633.20 922.10L1638.00 926.70L1642.80 922.10" fill="none" stroke="#e4e5e6" stroke-width="1.3"/><path d="M1824.20 922.10L1829.00 926.70L1833.80 922.10" fill="none" stroke="#e4e5e6" stroke-width="1.3"/><g fill="none" stroke="#e4e5e6" stroke-width="1.300"><path d="M865 892H849.400M855.600 885.800L849.200 892L855.600 898.200"/><path d="M1470 892H1485.600M1479.400 885.800L1485.800 892L1479.400 898.200"/></g><path d="M1217.80 810.10L1222.20 814.30L1226.60 810.10" fill="none" stroke="#e4e5e6" stroke-width="1.3"/></svg>
<div class="badge" style="left:502.8px;top:911.0px;width:25.0px;height:25.0px"></div>
<div class="t" style="left:510.99px;top:915.93px;font-size:15.50px;color:#fff;-webkit-text-stroke:.3px #fff;">5</div>
<div class="badge" style="left:587.7px;top:911.0px;width:25.0px;height:25.0px"></div>
<div class="t" style="left:595.89px;top:915.93px;font-size:15.50px;color:#fff;-webkit-text-stroke:.3px #fff;">3</div>
<div class="t" style="left:1579.30px;top:915.52px;font-size:16.40px;color:#fff;letter-spacing:-0.159px;-webkit-text-stroke:.35px #fff;">Fit</div>
<div class="t" style="left:1729.80px;top:915.52px;font-size:16.40px;color:#fff;letter-spacing:-0.565px;-webkit-text-stroke:.35px #fff;">Layers</div>
<div class="badge" style="left:1785.4px;top:909.9px;width:27.6px;height:27.6px"></div>
<div class="t" style="left:1790.58px;top:916.13px;font-size:15.50px;color:#fff;-webkit-text-stroke:.3px #fff;">14</div>
<div class="t" style="left:1104.80px;top:802.32px;font-size:16.40px;color:#fff;letter-spacing:-0.577px;">10 of 11 pages</div>
<div class="abs" style="left:1044.50px;top:936.80px;width:385.00px;height:4.00px;background:#3a3e40;border-radius:2px 2px 0 0"></div>

<div class="th" style="left:902.0px;background:#fff"><svg style="left:0.00px;top:0.00px;" width="51.00" height="90.00" viewBox="0 0 51 90"><rect width="51" height="90" fill="#1f2823"/><path d="M0 40L26 22L34 30L6 58Z" fill="#8a4c40"/><path d="M2 44L22 30L27 36L7 52Z" fill="#c98a80"/><path d="M0 78L44 36L51 40V58L14 90H0Z" fill="#7a4034"/><path d="M8 78L40 48L47 54L16 86Z" fill="#c7907e"/><path d="M0 62L40 28L44 33L2 70Z" fill="#15201a"/><path d="M28 32L40 24L46 34L36 42Z" fill="#b58a94"/><path d="M32 28L38 25L41 31L35 34Z" fill="#e0b8c0"/><circle cx="26" cy="69" r="5.500" fill="#e6d4a8"/><circle cx="26" cy="69" r="2.500" fill="#b88a50"/><path d="M36 58L44 52L48 58L40 64Z" fill="#e8c8b0"/><circle cx="14" cy="84" r="4.500" fill="#c8a898"/><path d="M44 2H51V30L46 30Z" fill="#3a2e1a"/><path d="M46 13H51V30H47Z" fill="#d89a20"/><path d="M20 0H44V8H20Z" fill="#4a3020"/><circle cx="2" cy="84" r="5" fill="#2a90c0"/><path d="M5 80L9 78L11 86L6 88Z" fill="#b03030"/><path d="M36 70L51 60V90H30Z" fill="#2a3a36"/><rect x="5" y="6.900" width="41.400" height="21.200" fill="#f6f6f3"/><path d="M8.500 12.200H22" stroke="#222" stroke-width="1.500"/><path d="M8.500 16.600H41M8.500 19.600H41M8.500 22.600H24" stroke="#8e8e8e" stroke-width="1"/></svg>
</div>
<div class="th" style="left:970.8px;background:#fff"><svg style="left:0.00px;top:0.00px;" width="51.00" height="90.00" viewBox="0 0 51 90"><defs><linearGradient id="t2g" x1="0" y1="0" x2="0" y2="1"><stop offset="0" stop-color="#c4c9c7"/><stop offset=".4" stop-color="#b4b9b7"/><stop offset=".7" stop-color="#a9adab"/><stop offset="1" stop-color="#b9bcba"/></linearGradient></defs><rect width="51" height="90" fill="url(#t2g)"/><path d="M25 6L30 2L35 6V16H25Z" fill="#8ea89e" opacity=".8"/><path d="M14 14H40V24H14Z" fill="#c9c4b4" opacity=".6"/><path d="M42 16H51V50H42Z" fill="#7f9a94" opacity=".7"/><path d="M0 24H10V50H0Z" fill="#9aa4a2" opacity=".7"/><path d="M22 28C22 22 34 22 34 30L33 42C30 48 25 48 23 42Z" fill="#7a4634"/><path d="M21 29C22 23 33 22 35 29L34 31H21Z" fill="#1c1a1a"/><path d="M8 28L21 27L23 35L10 37Z" fill="#17171a"/><path d="M14 48C20 42 36 42 44 48L50 66L50 90H16L14 68Z" fill="#1d1f23"/><path d="M3 56L11 36L17 38L13 54L18 62L10 66Z" fill="#c99276"/><path d="M18 52L26 44L40 56L36 64L24 58Z" fill="#c48c70"/><path d="M38 46L47 52L51 70V90H44L43 62Z" fill="#2b2f31"/><path d="M15 13.600H37" stroke="#e8e8e8" stroke-width="1" opacity=".7"/><path d="M12 77.500H40M14 80.500H37" stroke="#dfe6e4" stroke-width="1" opacity=".8"/><path d="M44 84H51V90H44Z" fill="#e4e6e4"/></svg>
</div>
<div class="th" style="left:1039.2px;background:#fff"><svg style="left:0.00px;top:0.00px;" width="51.00" height="90.00" viewBox="0 0 51 90"><defs><linearGradient id="t3g" x1="0" y1="0" x2="0" y2="1"><stop offset="0" stop-color="#ec8a4a"/><stop offset=".25" stop-color="#e39a6a"/><stop offset=".5" stop-color="#b8917a"/><stop offset=".7" stop-color="#8a7660"/><stop offset="1" stop-color="#6e5a40"/></linearGradient></defs><rect width="51" height="90" fill="url(#t3g)"/><path d="M18 0C22 8 20 16 26 24C28 34 22 44 26 54C30 50 34 44 32 34C36 24 30 14 36 4L34 0Z" fill="#f0c8a8" opacity=".7"/><path d="M4 50L9 18L14 50L18 70H0Z" fill="#8a5a4a"/><path d="M8 26L9 18L10 26Z" fill="#d8a840"/><path d="M36 44L41 22L46 44L48 60H34Z" fill="#7a5444"/><path d="M0 60C14 54 30 58 51 52V90H0Z" fill="#6a5a3c" opacity=".9"/><path d="M22 40C26 48 24 54 30 60" stroke="#d8c8b8" stroke-width="2.500" fill="none" opacity=".8"/><path d="M6 77H30M6 80H40M6 83H36" stroke="#f0e8e0" stroke-width="1"/></svg>
</div>
<div class="th" style="left:1108.0px;background:#fff"><svg style="left:0.00px;top:0.00px;" width="51.00" height="90.00" viewBox="0 0 51 90"><rect width="51" height="90" fill="#fff"/><rect width="40" height="49" fill="#4a5a4a"/><path d="M12 0H26V20H12Z" fill="#c8961e"/><path d="M0 0H10V49H0Z" fill="#6a7a70"/><path d="M30 0H40V30H30Z" fill="#7a8a88"/><ellipse cx="19" cy="16" rx="6" ry="7" fill="#b8a890"/><path d="M14 8L19 2L24 8Z" fill="#c8a040"/><path d="M6 30C10 22 28 22 32 30L34 49H4Z" fill="#9aa098"/><path d="M14 30H24V40H14Z" fill="#c8c4b4"/><rect x="30" y="39" width="10" height="10" fill="#0c0c0c"/></svg>
</div>
<div class="th" style="left:1177.0px;background:#fff"><svg style="left:0.00px;top:0.00px;" width="51.00" height="90.00" viewBox="0 0 51 90"><defs><linearGradient id="t5g" x1="0" y1="0" x2="0" y2="1"><stop offset="0" stop-color="#8aa6c4"/><stop offset=".35" stop-color="#a2b8cf"/><stop offset=".6" stop-color="#8ea4b6"/><stop offset=".8" stop-color="#6e8e9a"/><stop offset="1" stop-color="#5f8892"/></linearGradient></defs><rect width="51" height="90" fill="url(#t5g)"/><path d="M14 6L22 3L30 8L40 20L46 34L51 36V70H30Z" fill="#9fb2c4" opacity=".8"/><path d="M0 56C8 52 16 56 22 62C28 68 32 72 34 76H0Z" fill="#7f969c"/><rect x="29" y="43.200" width="10.200" height="10.400" fill="#0b0b0c"/><path d="M26 76C32 80 40 80 46 74L44 82C38 86 30 84 26 80Z" fill="#2a2c30"/></svg>
</div>
<div class="th" style="left:1244.8px;background:#fff"><svg style="left:0.00px;top:0.00px;" width="51.00" height="90.00" viewBox="0 0 51 90"><rect width="51" height="90" fill="#fff"/><rect x="0" y="9.2" width="17.200" height="18" fill="#4a9ac0"/><rect x="0" y="18.2" width="17.200" height="8" fill="#58c0b8" opacity=".8"/><path d="M21 16.4H28" stroke="#3a5a4c" stroke-width="1.400"/><path d="M21 19.8H44" stroke="#b8b8b8" stroke-width="1"/><rect x="0" y="27.2" width="17.200" height="18" fill="#1c1e22"/><rect x="0" y="36.2" width="17.200" height="8" fill="#6a6460" opacity=".8"/><path d="M21 34.4H28" stroke="#3a5a4c" stroke-width="1.400"/><path d="M21 37.8H44" stroke="#b8b8b8" stroke-width="1"/><rect x="0" y="45.2" width="17.200" height="18" fill="#7a8e90"/><rect x="0" y="54.2" width="17.200" height="8" fill="#c8a860" opacity=".8"/><path d="M21 52.4H28" stroke="#3a5a4c" stroke-width="1.400"/><path d="M21 55.8H44" stroke="#b8b8b8" stroke-width="1"/><rect x="0" y="63.2" width="17.200" height="18" fill="#3e5a26"/><rect x="0" y="72.2" width="17.200" height="8" fill="#9aa048" opacity=".8"/><path d="M21 70.4H28" stroke="#3a5a4c" stroke-width="1.400"/><path d="M21 73.8H44" stroke="#b8b8b8" stroke-width="1"/><ellipse cx="8" cy="36" rx="3" ry="5" fill="#b8a090"/><path d="M12 70L17.200 62V82Z" fill="#d8d060"/></svg>
</div>
<div class="th" style="left:1313.9px;background:#fff"><svg style="left:0.00px;top:0.00px;" width="51.00" height="90.00" viewBox="0 0 51 90"><rect width="51" height="90" fill="#fff"/><g transform="translate(0 26.300) scale(.1575)"><rect width="197.500" height="94" fill="#8a8a2a"/><rect x="0" y="0" width="70" height="94" fill="#8f9a30"/><rect x="110" y="0" width="88" height="94" fill="#b04a22"/><rect x="150" y="0" width="48" height="60" fill="#7a3018"/><path d="M63 0C70 6 82 10 80 16C79 24 80 28 76 33C68 41 58 42 50 47C40 53 32 58 26 64C18 73 10 84 3 94L70 94C80 88 90 84 94 79C100 72 104 66 106 60C110 52 115 46 115 39C116 30 117 22 116 15C115 9 112 4 110 0Z" fill="#d9dade"/></g><g transform="translate(0 41.100) scale(.1575)"><defs><linearGradient id="mg1t" x1="0" y1="0" x2="0" y2="1"><stop offset="0" stop-color="#f0a083"/><stop offset=".22" stop-color="#e8977b"/><stop offset=".4" stop-color="#d38570"/><stop offset="1" stop-color="#8a5a40"/></linearGradient></defs><rect width="197.5" height="94.0" fill="url(#mg1t)"/><path d="M0 20C20 17 40 22 60 25C90 28 110 25 140 28C160 30 180 28 198 27V94H0Z" fill="#d98a74" opacity=".85"/><path d="M0 26C14 23 26 28 40 30C56 33 70 37 90 40C110 44 130 42 150 44C170 46 186 44 198 46V94H0Z" fill="#b46f62"/><path d="M0 38C12 36 24 38 36 40C50 44 62 46 76 46C96 48 120 50 150 52C170 54 186 54 198 54V94H0Z" fill="#9c5f58"/><path d="M0 52C8 48 20 44 32 43C44 42 56 48 66 54C80 58 92 58 104 57C124 58 150 60 198 62V94H0Z" fill="#875046"/><path d="M0 62C20 60 40 64 60 68C80 72 100 72 120 72C150 72 170 68 198 66V94H0Z" fill="#80503c"/><path d="M0 72C14 72 28 76 42 80C56 84 62 88 70 90L198 90V94H0Z" fill="#6a3c26"/><path d="M44 94C58 88 70 84 84 82C100 78 116 77 130 75C150 72 170 70 198 64V94Z" fill="#6a4920"/><path d="M112 80C130 74 150 74 165 72C180 68 190 66 198 64V94H100Z" fill="#4a3714" opacity=".85"/><path d="M0 78C10 80 22 84 30 90L34 94H0Z" fill="#5e3a24" opacity=".8"/><ellipse cx="69.600" cy="65.600" rx="2.300" ry="2.600" fill="#2a1c18"/><path d="M66 69.500C68 68 71 68 72.500 69.500L73 82L72 94H67.500L67 82C64 82 62.500 79 63 76C63.500 73 64.500 71 66 69.500Z" fill="#2a1c18"/></g><g transform="translate(0 55.900) scale(.1575)"><rect width="197.500" height="94" fill="#1ca8a2"/><ellipse cx="118" cy="48" rx="30" ry="26" fill="#1a6a66" opacity=".7"/><ellipse cx="103" cy="28" rx="20" ry="17" fill="#8a8078"/><ellipse cx="72" cy="54" rx="31" ry="27" fill="#d0bab2"/></g><rect x="31.100" y="0" width="20" height="26.300" fill="#fff"/><rect x="31.100" y="26.300" width="20" height="14.800" fill="#fdc658"/><rect x="31.100" y="41.100" width="20" height="14.800" fill="#fff"/><rect x="31.100" y="55.900" width="20" height="14.800" fill="#e9ecea"/><rect x="0" y="70.700" width="51" height="20" fill="#fff"/><path d="M34.400 32.600H43.400M34.400 35.200H40" stroke="#a88a30" stroke-width="1.200"/><path d="M34.400 46.800H43M34.400 49H44M34.400 51.200H38" stroke="#7a8a84" stroke-width="1"/><path d="M34.400 61.600H43M34.400 63.800H44M34.400 66H42" stroke="#6f8f84" stroke-width="1"/><rect x="9.3" y="78.200" width="2.600" height="2.400" fill="#2a6a58" opacity=".8"/><rect x="18.4" y="78.200" width="2.600" height="2.400" fill="#2a6a58" opacity=".8"/><rect x="28.7" y="78.200" width="2.600" height="2.400" fill="#2a6a58" opacity=".8"/><rect x="38.6" y="78.200" width="2.600" height="2.400" fill="#2a6a58" opacity=".8"/></svg>
</div>
<div class="th" style="left:1382.9px;background:#fff"><svg style="left:0.00px;top:0.00px;" width="51.00" height="90.00" viewBox="0 0 51 90"><rect width="51" height="90" fill="#fff"/><rect x="6" y="23.800" width="13" height="2.400" fill="#9a9a9a"/><rect x="6" y="26.400" width="6" height="2.400" fill="#aaa"/><rect x="6" y="36.200" width="12.400" height="2.400" fill="#a4a4a4"/><rect x="6" y="39.600" width="5" height="2.400" fill="#aaa"/></svg>
</div>
<div class="osw" style="left:974.40px;top:856.13px;font-size:12.01px;color:#f4f4f0;transform:scaleX(0.7205);font-weight:normal;-webkit-text-stroke:0.40px #f4f4f0;">BANGKOK</div>
<div class="osw" style="left:1044.60px;top:897.56px;font-size:6.42px;color:#f4ece4;transform:scaleX(0.6818);">TOP 5</div>
<div class="osw" style="left:1044.60px;top:904.16px;font-size:6.42px;color:#f4ece4;transform:scaleX(0.7455);">CHIANG MAI</div>
<div class="osw" style="left:1113.20px;top:895.00px;font-size:6.15px;color:#2a6a58;transform:scaleX(0.6507);font-weight:normal;">TEMPLE</div>
<div class="osw" style="left:1113.20px;top:901.40px;font-size:6.15px;color:#2a6a58;transform:scaleX(0.6778);font-weight:normal;">NAIVE</div>
<svg style="left:1108.00px;top:839.00px;" width="51.00" height="90.00" viewBox="0 0 51 90"><path d="M5 70.500H36M5 73.500H40M5 76.500H40M5 79.500H24" stroke="#a8aaa8" stroke-width="1"/></svg>
<div class="osw" style="left:1182.00px;top:851.38px;font-size:6.28px;color:#1c2226;transform:scaleX(0.7010);">ISLAND</div>
<div class="osw" style="left:1182.00px;top:857.58px;font-size:6.28px;color:#1c2226;transform:scaleX(0.7245);">HOPPING</div>
<svg style="left:1177.00px;top:839.00px;" width="51.00" height="90.00" viewBox="0 0 51 90"><path d="M5 27.500H34M5 30.300H35M5 33.100H33M5 35.900H34M5 38.700H30" stroke="#4a5a68" stroke-width=".9" opacity=".8"/></svg>
<div class="osw" style="left:1319.00px;top:850.18px;font-size:6.28px;color:#2f6f5c;transform:scaleX(0.6895);font-weight:normal;">MORE</div>
<div class="osw" style="left:1319.00px;top:856.38px;font-size:6.28px;color:#2f6f5c;transform:scaleX(0.7134);font-weight:normal;">STORIES</div>
<div class="abs" style="left:1309.3px;top:835px;width:59.600px;height:98.700px;border:1.700px solid #dcdcdc;border-radius:7px"></div>


<!-- ===== left style panel ===== -->
<div id="panel">
<div class="t" style="left:87.00px;top:20.83px;font-size:15.20px;color:#a3a7a9;font-weight:bold;letter-spacing:0.502px;">Insert</div>
<div class="t" style="left:167.00px;top:20.83px;font-size:15.20px;color:#ffffff;font-weight:bold;letter-spacing:0.317px;">Style</div>
<div class="t" style="left:241.00px;top:20.83px;font-size:15.20px;color:#a3a7a9;font-weight:bold;letter-spacing:0.641px;">Document</div>
<div class="abs" style="left:167.00px;top:56.00px;width:38.40px;height:3.00px;background:#79b3ff;border-radius:1.5px"></div>
<div class="hr" style="top:57px"></div>
<svg style="left:0.00px;top:0.00px;" width="406.00" height="120.00" viewBox="0 0 406 120"><circle cx="135.0" cy="88" r="1.05" fill="#fff"/><circle cx="140.2" cy="88" r="1.05" fill="#fff"/><circle cx="145.4" cy="88" r="1.05" fill="#fff"/><g transform="translate(202.0 88) rotate(-45)" fill="none" stroke="#a0a4a6" stroke-width="1.4"><rect x="-11.6" y="-3.400" width="13.400" height="6.800" rx="3.400"/><rect x="-1.800" y="-3.400" width="13.400" height="6.800" rx="3.400"/></g><g fill="none" stroke="#a0a4a6" stroke-width="1.2"><path d="M256.0 84.800H265.2M258.0 87.050H264.6M260.2 89.300H265.0"/><circle cx="271.7" cy="88.300" r="4.700"/></g></svg>
<div class="abs" style="left:127.00px;top:115.00px;width:27.00px;height:2.40px;background:#79b3ff;border-radius:1.2px"></div>
<div class="hr" style="top:116px"></div>
<div class="abs" style="left:0.00px;top:117.00px;width:406.00px;height:72.00px;background:#1e2122;"></div>
<svg style="left:0.00px;top:0.00px;" width="406.00" height="200.00" viewBox="0 0 406 200"><g transform="translate(77.00 152.80)"><path d="M-5.6 -8.8V8.8M5.6 -8.8V8.8" stroke="#e4e5e6" stroke-width="1.4" fill="none"/><rect x="-2.3" y="-4.5" width="4.6" height="9" rx="1.2" fill="#e4e5e6"/></g><g transform="translate(113.00 152.80)"><path d="M-8.9 -5.5H8.9M-8.9 5.5H8.9" stroke="#e4e5e6" stroke-width="1.4" fill="none"/><rect x="-4.7" y="-2.2" width="9.4" height="4.4" rx="1.2" fill="#e4e5e6"/></g><g transform="translate(149.00 152.80)"><path d="M-5.5 -8.8V8.8" stroke="#e4e5e6" stroke-width="1.4" fill="none"/><rect x="-2.7" y="-2.2" width="9.2" height="4.4" rx="1.2" fill="#e4e5e6"/></g><g transform="translate(185.00 152.80)"><path d="M0 -8.8V-3.6M0 3.6V8.8" stroke="#e4e5e6" stroke-width="1.4" fill="none"/><rect x="-4.7" y="-2.2" width="9.4" height="4.4" rx="1.2" fill="#e4e5e6"/></g><g transform="translate(221.00 152.80)"><path d="M5.5 -8.8V8.8" stroke="#e4e5e6" stroke-width="1.4" fill="none"/><rect x="-6.5" y="-2.2" width="9.2" height="4.4" rx="1.2" fill="#e4e5e6"/></g><g transform="translate(257.00 152.80)"><path d="M-8.9 -5.6H8.9" stroke="#e4e5e6" stroke-width="1.4" fill="none"/><rect x="-2.4" y="-2.9" width="4.8" height="8.8" rx="1.2" fill="#e4e5e6"/></g><g transform="translate(293.00 152.80)"><path d="M-9 0H-3.8M3.8 0H9" stroke="#e4e5e6" stroke-width="1.4" fill="none"/><rect x="-2.4" y="-4.5" width="4.8" height="9" rx="1.2" fill="#e4e5e6"/></g><g transform="translate(329.00 152.80)"><path d="M-8.9 5.5H8.9" stroke="#e4e5e6" stroke-width="1.4" fill="none"/><rect x="-2.4" y="-5.9" width="4.8" height="8.6" rx="1.2" fill="#e4e5e6"/></g></svg>
<div class="hr" style="top:188.6px"></div>
<svg style="left:0.00px;top:0.00px;" width="406.00" height="940.00" viewBox="0 0 406 940"><path d="M18.10 222.20L22.90 227.00L27.70 222.20" fill="none" stroke="#e4e5e6" stroke-width="1.4"/><path d="M18.10 533.20L22.90 538.00L27.70 533.20" fill="none" stroke="#e4e5e6" stroke-width="1.4"/><g transform="translate(374.00 336.40)" fill="none" stroke="#e4e5e6" stroke-width="1.4"><rect x="-6.6" y="-1.2" width="13.2" height="9.6" rx="1.6"/><path d="M-3.4 -1.2V-4.6a3.4 3.4 0 0 1 6.8 0V-1.2"/><circle cx="0" cy="3.9" r="1.2" fill="#e4e5e6" stroke="none"/></g><g transform="translate(280.00 453.60)" fill="none" stroke="#e4e5e6" stroke-width="1.4"><rect x="-6.6" y="-1.2" width="13.2" height="9.6" rx="1.6"/><path d="M-3.4 -1.2V-4.6a3.4 3.4 0 0 1 6.8 0V-1.2"/><circle cx="0" cy="3.9" r="1.2" fill="#e4e5e6" stroke="none"/></g><g transform="translate(168.00 589.60)" fill="none" stroke="#e4e5e6" stroke-width="1.4"><rect x="-6.6" y="-1.2" width="13.2" height="9.6" rx="1.6"/><path d="M-3.4 -1.2V-4.6a3.4 3.4 0 0 1 6.8 0V-1.2"/><circle cx="0" cy="3.9" r="1.2" fill="#e4e5e6" stroke="none"/></g><path d="M176.2 336.4H185.0" stroke="#6f7577" stroke-width="1.4"/><path d="M143.4 388.4V401.4H157.4" fill="none" stroke="#9a9fa1" stroke-width="1.2"/><path d="M143.4 393.6a7.8 7.8 0 0 1 7.6 7.8" fill="none" stroke="#9a9fa1" stroke-width="1.2"/><g transform="translate(325.9 395.6)"><path d="M0 -8.2C3 -5 6.4 -2 6.4 1.6A6.4 6.4 0 0 1 -6.4 1.6C-6.4 -2 -3 -5 0 -8.2Z" fill="none" stroke="#c8cbcc" stroke-width="1.3"/><path d="M-6.300 .3H6.300A6.400 6.400 0 0 1 -6.300 .3Z" fill="#b4b8ba"/></g><path d="M231.6 459.6V455a8.4 8.4 0 0 1 8.4 -8.4H244.4" fill="none" stroke="#9a9fa1" stroke-width="1.2"/></svg>
<div class="t" style="left:41.20px;top:214.46px;font-size:18.00px;color:#ffffff;font-weight:bold;letter-spacing:0.022px;">Selection</div>
<div class="t" style="left:41.60px;top:526.26px;font-size:18.00px;color:#ffffff;font-weight:bold;letter-spacing:-0.002px;">Border</div>
<div class="inp" style="left:14.3px;top:257.2px;width:158.0px;height:41px"></div>
<div class="inp" style="left:190.1px;top:257.2px;width:156.6px;height:41px"></div>
<div class="inp" style="left:14.3px;top:316.2px;width:158.0px;height:40px"></div>
<div class="inp" style="left:190.1px;top:316.2px;width:156.6px;height:40px"></div>
<div class="inp" style="left:14.3px;top:374.3px;width:158.0px;height:41px"></div>
<div class="inp" style="left:190.1px;top:374.3px;width:156.6px;height:41px"></div>
<div class="inp" style="left:14.3px;top:433.2px;width:238.8px;height:40px"></div>
<div class="inp" style="left:14.3px;top:569.2px;width:118.6px;height:40px"></div>
<div class="t" style="left:28.80px;top:269.78px;font-size:15.50px;color:#9a9fa1;letter-spacing:0.263px;">Mixed</div>
<div class="t" style="left:204.60px;top:269.78px;font-size:15.50px;color:#9a9fa1;letter-spacing:0.263px;">Mixed</div>
<div class="t" style="left:28.80px;top:328.28px;font-size:15.50px;color:#9a9fa1;letter-spacing:0.263px;">Mixed</div>
<div class="t" style="left:204.60px;top:328.28px;font-size:15.50px;color:#9a9fa1;letter-spacing:0.263px;">Mixed</div>
<div class="t" style="left:147.60px;top:269.78px;font-size:15.50px;color:#9a9fa1;">X</div>
<div class="t" style="left:321.40px;top:269.78px;font-size:15.50px;color:#9a9fa1;">Y</div>
<div class="t" style="left:142.40px;top:328.28px;font-size:15.50px;color:#9a9fa1;">W</div>
<div class="t" style="left:321.00px;top:328.28px;font-size:15.50px;color:#9a9fa1;">H</div>
<div class="t" style="left:28.80px;top:386.58px;font-size:15.50px;color:#e4e5e6;">0°</div>
<div class="t" style="left:204.40px;top:386.58px;font-size:15.50px;color:#e4e5e6;letter-spacing:0.052px;">100%</div>
<div class="t" style="left:28.80px;top:445.48px;font-size:15.50px;color:#e4e5e6;">0</div>
<div class="t" style="left:28.80px;top:581.28px;font-size:15.50px;color:#e4e5e6;">0</div>
<div class="hr" style="top:500px"></div>
<div class="hr" style="top:636px"></div>

</div>

<!-- ===== WP sidebar ===== -->
<div id="wp">
<svg style="left:8.1px;top:17.7px" width="25" height="25" viewBox="0 0 20 20"><path d="M3.76 16h12.48c1.1-1.37 1.76-3.11 1.76-5 0-4.42-3.58-8-8-8s-8 3.58-8 8c0 1.89.66 3.63 1.76 5zM10 4c.55 0 1 .45 1 1s-.45 1-1 1-1-.45-1-1 .45-1 1-1zM6 6c.55 0 1 .45 1 1s-.45 1-1 1-1-.45-1-1 .45-1 1-1zm8 0c.55 0 1 .45 1 1s-.45 1-1 1-1-.45-1-1 .45-1 1-1zm-5.37 5.55L12 7v6c0 1.1-.9 2-2 2s-2-.9-2-2c0-.57.24-1.08.63-1.45zM4 10c.55 0 1 .45 1 1s-.45 1-1 1-1-.45-1-1 .45-1 1-1zm12 0c.55 0 1 .45 1 1s-.45 1-1 1-1-.45-1-1 .45-1 1-1zm-5 3c0-.55-.45-1-1-1s-1 .45-1 1 .45 1 1 1 1-.45 1-1z" /></svg>
<svg style="left:9.3px;top:71.3px" width="22" height="22" viewBox="0 0 20 20"><path d="M10.44 3.02l1.82-1.82 6.36 6.35-1.83 1.82c-1.05-.68-2.48-.57-3.41.36l-.75.75c-.92.93-1.04 2.35-.35 3.41l-1.83 1.82-2.41-2.41-2.8 2.79c-.42.42-3.38 2.71-3.8 2.29s1.86-3.39 2.28-3.81l2.79-2.79L4.1 9.36l1.83-1.82c1.05.69 2.48.57 3.4-.36l.75-.75c.93-.92 1.05-2.35.36-3.41z" /></svg>
<svg style="left:8.1px;top:108.1px" width="25" height="25" viewBox="0 0 20 20"><path d="M12 11V4c0-.55-.45-1-1-1H9.5L8.5 1.5h-4L3.5 3H2c-.55 0-1 .45-1 1v7c0 .55.45 1 1 1h9c.55 0 1-.45 1-1zM6.5 4.7c1.5 0 2.7 1.2 2.7 2.7s-1.2 2.7-2.7 2.7S3.8 8.9 3.8 7.4s1.2-2.7 2.7-2.7zM13.5 6.5H19v9.3c0 1.2-1 2.2-2.2 2.2s-2.2-1-2.2-2.2 1-2.2 2.2-2.2c.25 0 .5.04.7.12V9h-2.5v6.8c0 1.2-1 2.2-2.2 2.2s-2.2-1-2.2-2.2 1-2.2 2.2-2.2c.25 0 .5.04.7.12V6.5z" /></svg>
<svg style="left:7.9px;top:147.5px" width="23" height="23" viewBox="0 0 20 20"><path d="M5 2h9c1.1 0 2 .9 2 2v7c0 1.1-.9 2-2 2h-2l-5 5v-5H5c-1.1 0-2-.9-2-2V4c0-1.1.9-2 2-2z" /></svg>
<svg style="left:9.3px;top:186.4px" width="22" height="22" viewBox="0 0 20 20"><path d="M10.44 3.02l1.82-1.82 6.36 6.35-1.83 1.82c-1.05-.68-2.48-.57-3.41.36l-.75.75c-.92.93-1.04 2.35-.35 3.41l-1.83 1.82-2.41-2.41-2.8 2.79c-.42.42-3.38 2.71-3.8 2.29s1.86-3.39 2.28-3.81l2.79-2.79L4.1 9.36l1.83-1.82c1.05.69 2.48.57 3.4-.36l.75-.75c.93-.92 1.05-2.35.36-3.41z" /></svg>
<svg style="left:9.3px;top:224.6px" width="22" height="22" viewBox="0 0 20 20"><path d="M10.44 3.02l1.82-1.82 6.36 6.35-1.83 1.82c-1.05-.68-2.48-.57-3.41.36l-.75.75c-.92.93-1.04 2.35-.35 3.41l-1.83 1.82-2.41-2.41-2.8 2.79c-.42.42-3.38 2.71-3.8 2.29s1.86-3.39 2.28-3.81l2.79-2.79L4.1 9.36l1.83-1.82c1.05.69 2.48.57 3.4-.36l.75-.75c.93-.92 1.05-2.35.36-3.41z" /></svg>
<svg style="left:9.3px;top:262.8px" width="22" height="22" viewBox="0 0 20 20"><path d="M10.44 3.02l1.82-1.82 6.36 6.35-1.83 1.82c-1.05-.68-2.48-.57-3.41.36l-.75.75c-.92.93-1.04 2.35-.35 3.41l-1.83 1.82-2.41-2.41-2.8 2.79c-.42.42-3.38 2.71-3.8 2.29s1.86-3.39 2.28-3.81l2.79-2.79L4.1 9.36l1.83-1.82c1.05.69 2.48.57 3.4-.36l.75-.75c.93-.92 1.05-2.35.36-3.41z" /></svg>
<svg style="left:9.3px;top:301.0px" width="22" height="22" viewBox="0 0 20 20"><path d="M10.44 3.02l1.82-1.82 6.36 6.35-1.83 1.82c-1.05-.68-2.48-.57-3.41.36l-.75.75c-.92.93-1.04 2.35-.35 3.41l-1.83 1.82-2.41-2.41-2.8 2.79c-.42.42-3.38 2.71-3.8 2.29s1.86-3.39 2.28-3.81l2.79-2.79L4.1 9.36l1.83-1.82c1.05.69 2.48.57 3.4-.36l.75-.75c.93-.92 1.05-2.35.36-3.41z" /></svg>
<svg style="left:9.3px;top:339.2px" width="22" height="22" viewBox="0 0 20 20"><path d="M10.44 3.02l1.82-1.82 6.36 6.35-1.83 1.82c-1.05-.68-2.48-.57-3.41.36l-.75.75c-.92.93-1.04 2.35-.35 3.41l-1.83 1.82-2.41-2.41-2.8 2.79c-.42.42-3.38 2.71-3.8 2.29s1.86-3.39 2.28-3.81l2.79-2.79L4.1 9.36l1.83-1.82c1.05.69 2.48.57 3.4-.36l.75-.75c.93-.92 1.05-2.35.36-3.41z" /></svg>
<svg style="left:9.3px;top:377.4px" width="22" height="22" viewBox="0 0 20 20"><path d="M10.44 3.02l1.82-1.82 6.36 6.35-1.83 1.82c-1.05-.68-2.48-.57-3.41.36l-.75.75c-.92.93-1.04 2.35-.35 3.41l-1.83 1.82-2.41-2.41-2.8 2.79c-.42.42-3.38 2.71-3.8 2.29s1.86-3.39 2.28-3.81l2.79-2.79L4.1 9.36l1.83-1.82c1.05.69 2.48.57 3.4-.36l.75-.75c.93-.92 1.05-2.35.36-3.41z" /></svg>
<svg style="left:9.3px;top:415.5px" width="22" height="22" viewBox="0 0 20 20"><path d="M10.44 3.02l1.82-1.82 6.36 6.35-1.83 1.82c-1.05-.68-2.48-.57-3.41.36l-.75.75c-.92.93-1.04 2.35-.35 3.41l-1.83 1.82-2.41-2.41-2.8 2.79c-.42.42-3.38 2.71-3.8 2.29s1.86-3.39 2.28-3.81l2.79-2.79L4.1 9.36l1.83-1.82c1.05.69 2.48.57 3.4-.36l.75-.75c.93-.92 1.05-2.35.36-3.41z" /></svg>
<svg style="left:9.3px;top:453.8px" width="22" height="22" viewBox="0 0 20 20"><path d="M10.44 3.02l1.82-1.82 6.36 6.35-1.83 1.82c-1.05-.68-2.48-.57-3.41.36l-.75.75c-.92.93-1.04 2.35-.35 3.41l-1.83 1.82-2.41-2.41-2.8 2.79c-.42.42-3.38 2.71-3.8 2.29s1.86-3.39 2.28-3.81l2.79-2.79L4.1 9.36l1.83-1.82c1.05.69 2.48.57 3.4-.36l.75-.75c.93-.92 1.05-2.35.36-3.41z" /></svg>
<svg style="left:9.3px;top:492.2px" width="22" height="22" viewBox="0 0 20 20"><path d="M10.44 3.02l1.82-1.82 6.36 6.35-1.83 1.82c-1.05-.68-2.48-.57-3.41.36l-.75.75c-.92.93-1.04 2.35-.35 3.41l-1.83 1.82-2.41-2.41-2.8 2.79c-.42.42-3.38 2.71-3.8 2.29s1.86-3.39 2.28-3.81l2.79-2.79L4.1 9.36l1.83-1.82c1.05.69 2.48.57 3.4-.36l.75-.75c.93-.92 1.05-2.35.36-3.41z" /></svg>
<svg style="left:8.8px;top:530.1px" width="23" height="23" viewBox="0 0 20 20"><path d="M19 4v2.4H1V4h18zM2 7.4h16V17H2V7.4zm11 3V9.2H7v1.2h6z" /></svg>
<div id="wpa"></div>
<svg style="left:0;top:561px" width="41" height="38" viewBox="0 0 41 38"><path d="M41 12.600L37.600 19.200L41 25.800Z" style="fill:#26292a"/><circle cx="19.6" cy="19" r="11.6" style="fill:#fff"/><rect x="13.6" y="12.6" width="8.4" height="12.8" rx="1.6" style="fill:#2271b1"/><rect x="23.2" y="14.2" width="1.9" height="9.6" rx=".9" style="fill:#2271b1"/><rect x="26.2" y="15.6" width="1.3" height="6.8" rx=".6" style="fill:#2271b1"/></svg>
<svg style="left:9.2px;top:619.3px" width="22" height="22" viewBox="0 0 20 20"><path d="M10 9.25c-2.27 0-2.73-3.44-2.73-3.44C7 4.02 7.82 2 9.97 2c2.16 0 2.98 2.02 2.71 3.81 0 0-.41 3.44-2.68 3.44zm0 2.57L12.72 10c2.39 0 4.52 2.33 4.52 4.53v2.49s-3.65 1.13-7.24 1.13c-3.65 0-7.24-1.13-7.24-1.13v-2.49c0-2.25 1.94-4.48 4.47-4.48z" /></svg>
<svg style="left:9.2px;top:657.2px" width="22" height="22" viewBox="0 0 20 20"><path d="M16.68 9.77c-1.34 1.34-3.3 1.67-4.95.99l-5.41 6.52c-.99.99-2.59.99-3.58 0s-.99-2.59 0-3.57l6.52-5.42c-.68-1.65-.35-3.61.99-4.95 1.28-1.28 3.12-1.62 4.72-1.06l-2.89 2.89 2.82 2.82 2.86-2.87c.53 1.58.18 3.39-1.08 4.65zM3.81 16.21c.4.39 1.04.39 1.43 0 .4-.4.4-1.04 0-1.43-.39-.4-1.03-.4-1.43 0-.39.39-.39 1.03 0 1.43z" /></svg>
<svg style="left:0;top:700px" width="40" height="36" viewBox="0 700 40 36"><path d="M26.200 707.800L19.800 724.400C18.800 727 17.400 728.600 15.400 729.400" style="fill:none;stroke:#c8cacc;stroke-width:4.200;stroke-linecap:round"/><path d="M14 710.600H23.200C26.600 710.600 29.300 713.300 29.300 716.700V727H14C11.800 727 10 725.200 10 723V714.600C10 712.400 11.800 710.600 14 710.600Z"/><path d="M26.200 707.800L19.800 724.400C18.800 727 17.400 728.600 15.400 729.400M14.600 713.600L19.400 723.600" style="fill:none;stroke:#1d2327;stroke-width:2.100;stroke-linecap:round;stroke-linejoin:round"/></svg>
<svg style="left:11.4px;top:749.6px" width="18.4" height="18.4" viewBox="0 0 20 20"><path d="M10 0a10 10 0 1 0 0 20 10 10 0 0 0 0-20zM7.800 6.200l6.200 3.800-6.200 3.800z"/></svg>

</div>

</body>
</html>
